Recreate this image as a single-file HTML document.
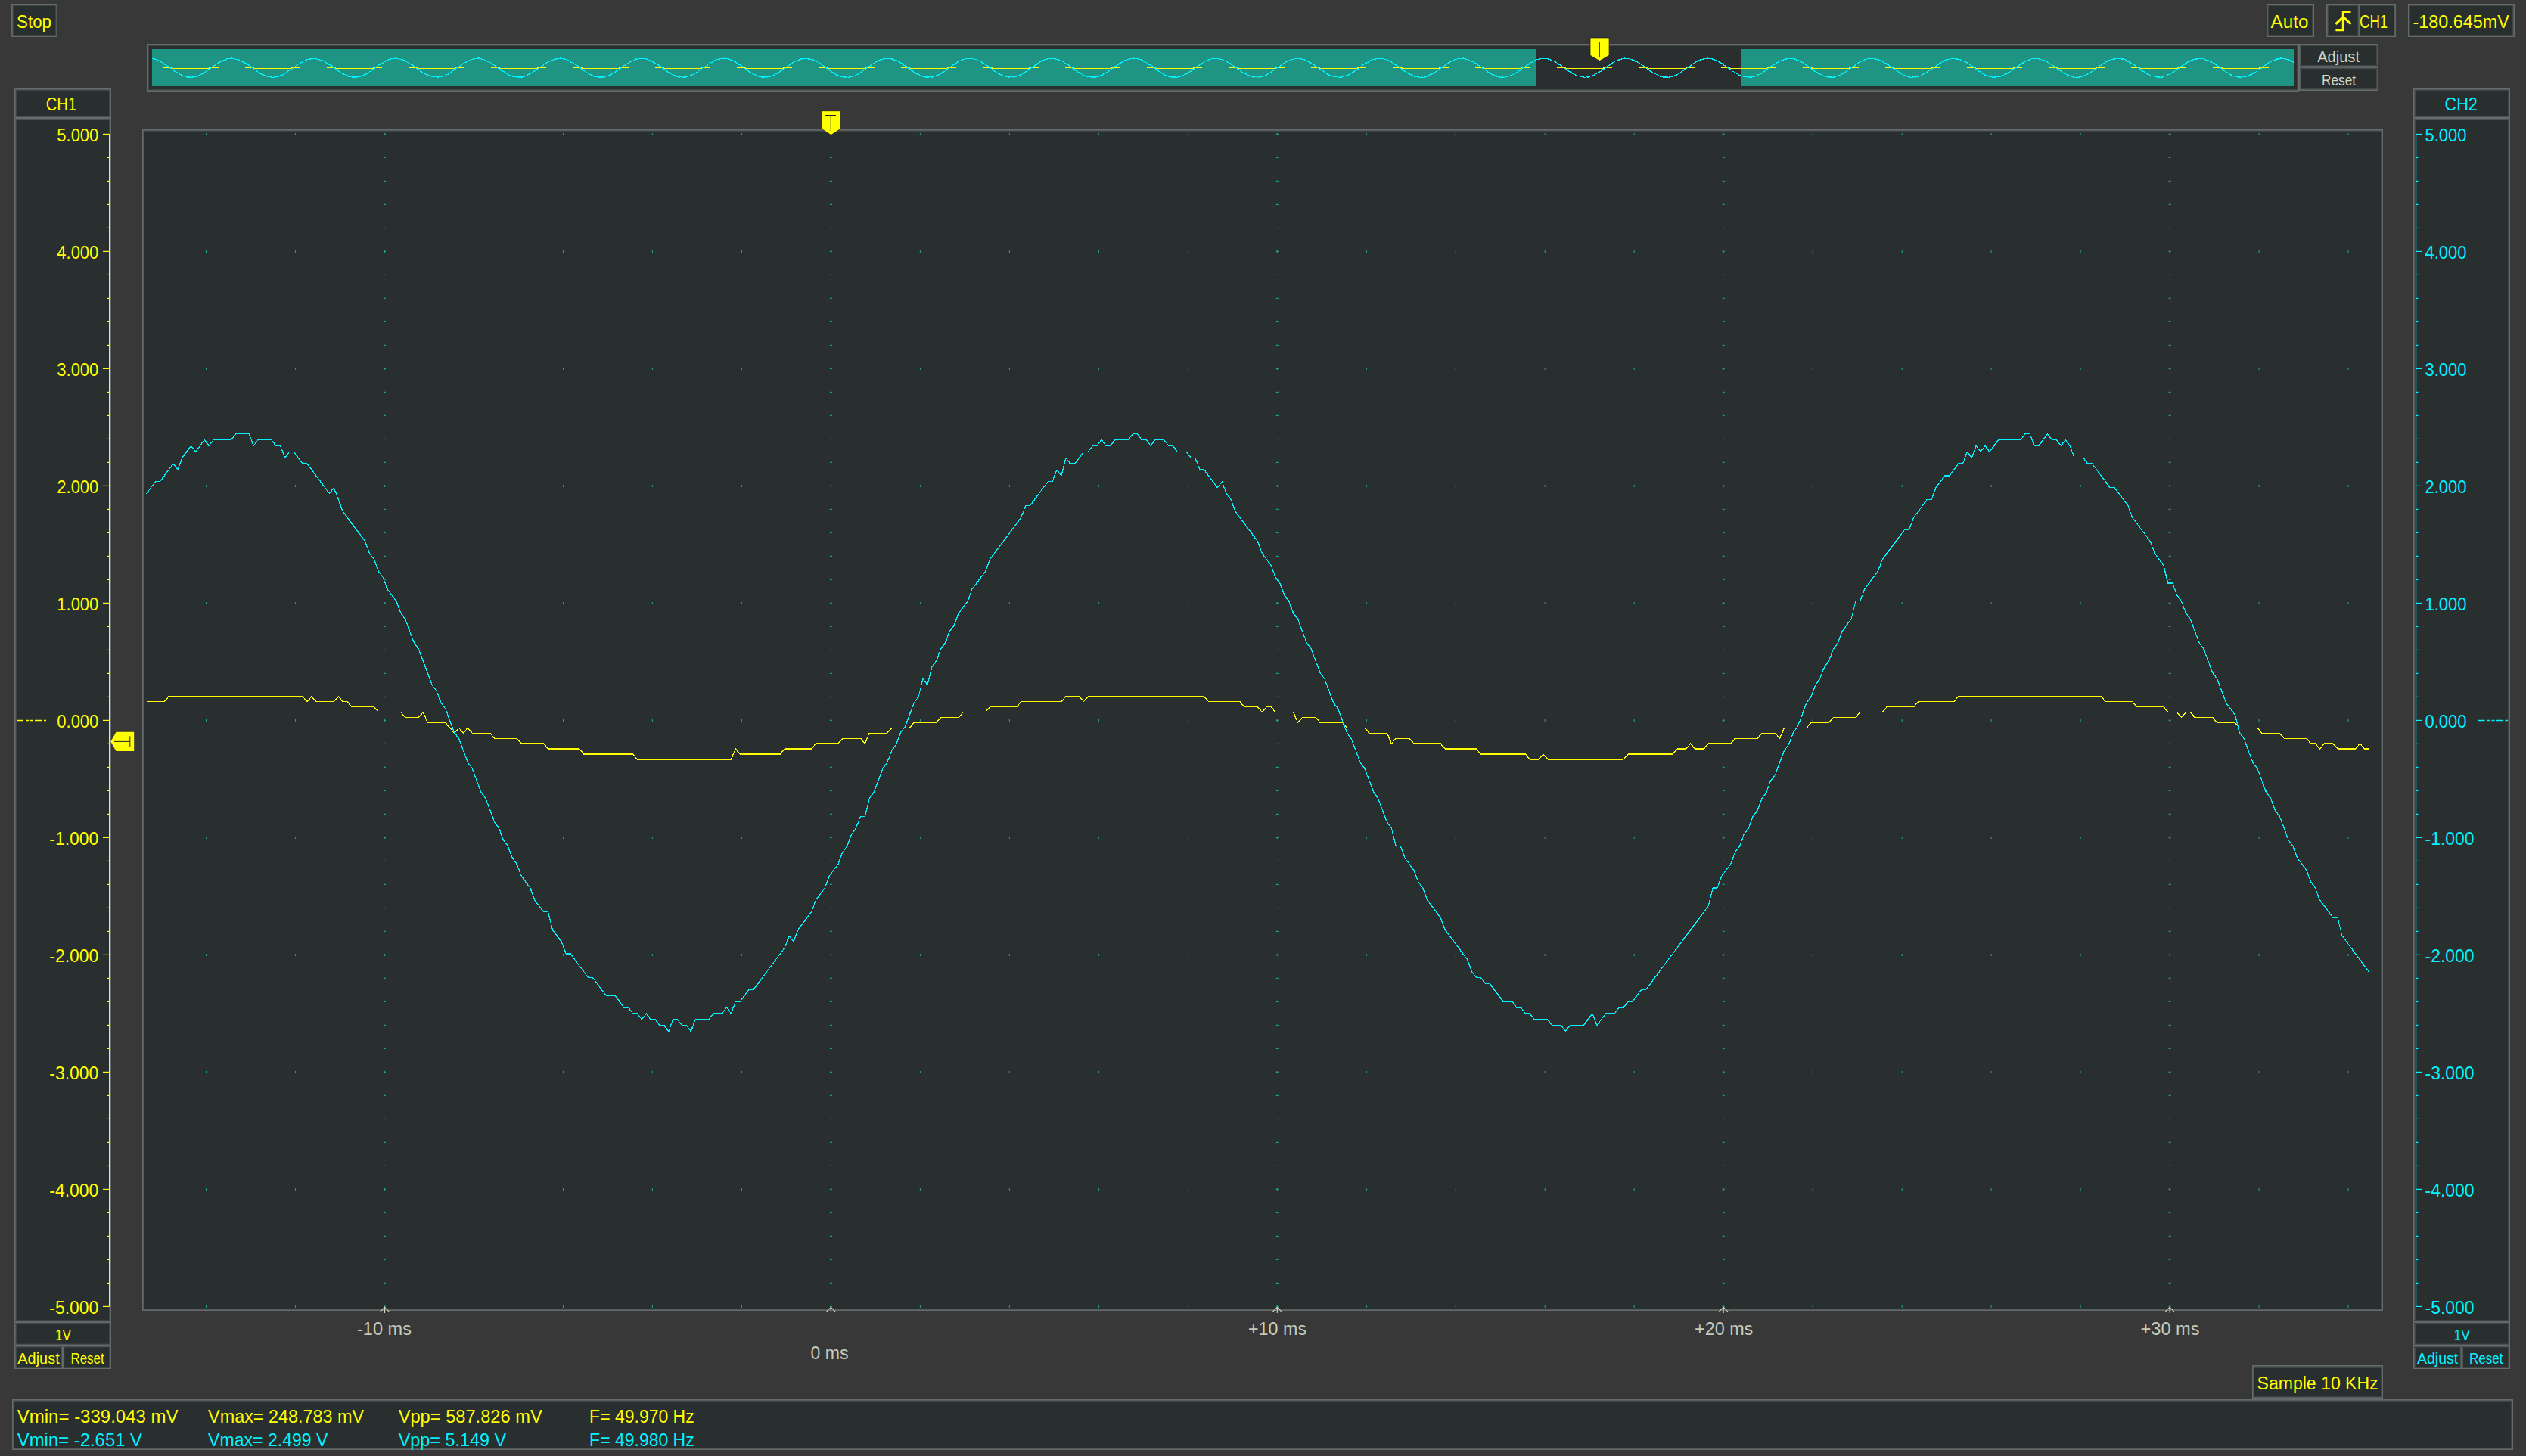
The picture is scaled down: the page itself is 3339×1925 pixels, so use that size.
<!DOCTYPE html><html><head><meta charset="utf-8"><style>html,body{margin:0;padding:0;background:#383838;overflow:hidden}svg{display:block}text{font-family:"Liberation Sans", sans-serif}</style></head><body>
<svg width="3339" height="1925" viewBox="0 0 3339 1925">
<rect x="0" y="0" width="3339" height="1925" fill="#383838"/>
<rect x="15" y="5" width="61" height="44" fill="#656b6b"/>
<rect x="16.2" y="6.2" width="58.6" height="41.6" fill="#515757"/>
<rect x="17.2" y="7.2" width="56.6" height="39.6" fill="#3a4040"/>
<rect x="18" y="8" width="55" height="38" fill="#292e2e"/>
<text x="22" y="37" fill="#ffff00" font-size="23.5" text-anchor="start" textLength="46" lengthAdjust="spacingAndGlyphs">Stop</text>
<rect x="2996" y="5" width="63" height="44" fill="#656b6b"/>
<rect x="2997.2" y="6.2" width="60.6" height="41.6" fill="#515757"/>
<rect x="2998.2" y="7.2" width="58.6" height="39.6" fill="#3a4040"/>
<rect x="2999" y="8" width="57" height="38" fill="#292e2e"/>
<text x="3001.6" y="37" fill="#ffff00" font-size="23.5" text-anchor="start" textLength="49.8" lengthAdjust="spacingAndGlyphs">Auto</text>
<rect x="3075" y="5" width="92" height="44" fill="#656b6b"/>
<rect x="3076.2" y="6.2" width="89.6" height="41.6" fill="#515757"/>
<rect x="3077.2" y="7.2" width="87.6" height="39.6" fill="#3a4040"/>
<rect x="3078" y="8" width="86" height="38" fill="#292e2e"/>
<rect y="7" x="3116.20" height="40" width="3.60" fill="#3a4040"/>
<rect y="7" x="3117.10" height="40" width="1.80" fill="#515757"/>
<rect y="7" x="3117.80" height="40" width="1.00" fill="#656b6b"/>
<path d="M3087.4 39.6 H3097.4 V15.5 H3107.5" fill="none" stroke="#ffff00" stroke-width="3.2" stroke-linejoin="miter"/>
<path d="M3087.4 31.8 L3097.4 22.4 L3107.5 31.8" fill="none" stroke="#ffff00" stroke-width="3.2"/>
<svg x="3119" y="0" width="46" height="55" overflow="hidden">
<text x="0" y="37" fill="#ffff00" font-size="23.5" text-anchor="start" textLength="37.2" lengthAdjust="spacingAndGlyphs">CH1</text>
</svg>
<rect x="3183" y="5" width="141" height="44" fill="#656b6b"/>
<rect x="3184.2" y="6.2" width="138.6" height="41.6" fill="#515757"/>
<rect x="3185.2" y="7.2" width="136.6" height="39.6" fill="#3a4040"/>
<rect x="3186" y="8" width="135" height="38" fill="#292e2e"/>
<text x="3189.6" y="37" fill="#ffff00" font-size="23.5" text-anchor="start" textLength="127.2" lengthAdjust="spacingAndGlyphs">-180.645mV</text>
<rect x="194" y="58" width="2845" height="63" fill="#656b6b"/>
<rect x="195.2" y="59.2" width="2842.6" height="60.6" fill="#515757"/>
<rect x="196.2" y="60.2" width="2840.6" height="58.6" fill="#3a4040"/>
<rect x="197" y="61" width="2839" height="57" fill="#292e2e"/>
<rect x="197" y="61" width="2839" height="57" fill="#2a2e2e"/>
<rect x="201" y="65" width="1830" height="49" fill="#1f9483"/>
<rect x="2302" y="65" width="730" height="49" fill="#1f9483"/>
<polyline points="201.0,88.5 202.0,88.5 203.0,88.5 204.0,88.5 205.0,88.5 206.0,88.5 207.0,88.5 208.0,88.5 209.0,88.5 210.0,88.5 211.0,88.5 212.0,88.5 213.0,88.5 214.0,88.5 215.0,88.5 216.0,89.5 217.0,89.5 218.0,89.5 219.0,89.5 220.0,89.5 221.0,89.5 222.0,89.5 223.0,89.5 224.0,89.5 225.0,89.5 226.0,89.5 227.0,89.5 228.0,90.7 229.0,90.7 230.0,90.7 231.0,90.7 232.0,90.7 233.0,90.7 234.0,90.7 235.0,90.7 236.0,90.7 237.0,90.7 238.0,90.7 239.0,90.7 240.0,90.7 241.0,90.7 242.0,90.7 243.0,90.7 244.0,90.7 245.0,90.7 246.0,90.7 247.0,90.7 248.0,90.7 249.0,90.7 250.0,90.7 251.0,90.7 252.0,90.7 253.0,90.7 254.0,90.7 255.0,90.7 256.0,90.7 257.0,90.7 258.0,90.7 259.0,90.7 260.0,90.7 261.0,90.7 262.0,90.7 263.0,90.7 264.0,90.7 265.0,90.7 266.0,90.7 267.0,90.7 268.0,90.7 269.0,90.7 270.0,90.7 271.0,90.7 272.0,90.7 273.0,90.7 274.0,90.7 275.0,90.7 276.0,90.7 277.0,89.5 278.0,89.5 279.0,89.5 280.0,89.5 281.0,89.5 282.0,89.5 283.0,89.5 284.0,89.5 285.0,89.5 286.0,89.5 287.0,89.5 288.0,89.5 289.0,88.5 290.0,88.5 291.0,88.5 292.0,88.5 293.0,88.5 294.0,88.5 295.0,88.5 296.0,88.5 297.0,88.5 298.0,88.5 299.0,88.5 300.0,88.5 301.0,88.5 302.0,88.5 303.0,88.5 304.0,88.5 305.0,88.5 306.0,88.5 307.0,88.5 308.0,88.5 309.0,88.5 310.0,88.5 311.0,88.5 312.0,88.5 313.0,88.5 314.0,88.5 315.0,88.5 316.0,88.5 317.0,88.5 318.0,88.5 319.0,88.5 320.0,88.5 321.0,88.5 322.0,88.5 323.0,88.5 324.0,88.5 325.0,89.5 326.0,89.5 327.0,89.5 328.0,89.5 329.0,89.5 330.0,89.5 331.0,89.5 332.0,89.5 333.0,89.5 334.0,89.5 335.0,89.5 336.0,90.7 337.0,90.7 338.0,90.7 339.0,90.7 340.0,90.7 341.0,90.7 342.0,90.7 343.0,90.7 344.0,90.7 345.0,90.7 346.0,90.7 347.0,90.7 348.0,90.7 349.0,90.7 350.0,90.7 351.0,90.7 352.0,90.7 353.0,90.7 354.0,90.7 355.0,90.7 356.0,90.7 357.0,90.7 358.0,90.7 359.0,90.7 360.0,90.7 361.0,90.7 362.0,90.7 363.0,90.7 364.0,90.7 365.0,90.7 366.0,90.7 367.0,90.7 368.0,90.7 369.0,90.7 370.0,90.7 371.0,90.7 372.0,90.7 373.0,90.7 374.0,90.7 375.0,90.7 376.0,90.7 377.0,90.7 378.0,90.7 379.0,90.7 380.0,90.7 381.0,90.7 382.0,90.7 383.0,90.7 384.0,90.7 385.0,90.7 386.0,89.5 387.0,89.5 388.0,89.5 389.0,89.5 390.0,89.5 391.0,89.5 392.0,89.5 393.0,89.5 394.0,89.5 395.0,89.5 396.0,89.5 397.0,88.5 398.0,88.5 399.0,88.5 400.0,88.5 401.0,88.5 402.0,88.5 403.0,88.5 404.0,88.5 405.0,88.5 406.0,88.5 407.0,88.5 408.0,88.5 409.0,88.5 410.0,88.5 411.0,88.5 412.0,88.5 413.0,88.5 414.0,88.5 415.0,88.5 416.0,88.5 417.0,88.5 418.0,88.5 419.0,88.5 420.0,88.5 421.0,88.5 422.0,88.5 423.0,88.5 424.0,88.5 425.0,88.5 426.0,88.5 427.0,88.5 428.0,88.5 429.0,88.5 430.0,88.5 431.0,88.5 432.0,88.5 433.0,89.5 434.0,89.5 435.0,89.5 436.0,89.5 437.0,89.5 438.0,89.5 439.0,89.5 440.0,89.5 441.0,89.5 442.0,89.5 443.0,89.5 444.0,90.7 445.0,90.7 446.0,90.7 447.0,90.7 448.0,90.7 449.0,90.7 450.0,90.7 451.0,90.7 452.0,90.7 453.0,90.7 454.0,90.7 455.0,90.7 456.0,90.7 457.0,90.7 458.0,90.7 459.0,90.7 460.0,90.7 461.0,90.7 462.0,90.7 463.0,90.7 464.0,90.7 465.0,90.7 466.0,90.7 467.0,90.7 468.0,90.7 469.0,90.7 470.0,90.7 471.0,90.7 472.0,90.7 473.0,90.7 474.0,90.7 475.0,90.7 476.0,90.7 477.0,90.7 478.0,90.7 479.0,90.7 480.0,90.7 481.0,90.7 482.0,90.7 483.0,90.7 484.0,90.7 485.0,90.7 486.0,90.7 487.0,90.7 488.0,90.7 489.0,90.7 490.0,90.7 491.0,90.7 492.0,90.7 493.0,90.7 494.0,89.5 495.0,89.5 496.0,89.5 497.0,89.5 498.0,89.5 499.0,89.5 500.0,89.5 501.0,89.5 502.0,89.5 503.0,89.5 504.0,89.5 505.0,88.5 506.0,88.5 507.0,88.5 508.0,88.5 509.0,88.5 510.0,88.5 511.0,88.5 512.0,88.5 513.0,88.5 514.0,88.5 515.0,88.5 516.0,88.5 517.0,88.5 518.0,88.5 519.0,88.5 520.0,88.5 521.0,88.5 522.0,88.5 523.0,88.5 524.0,88.5 525.0,88.5 526.0,88.5 527.0,88.5 528.0,88.5 529.0,88.5 530.0,88.5 531.0,88.5 532.0,88.5 533.0,88.5 534.0,88.5 535.0,88.5 536.0,88.5 537.0,88.5 538.0,88.5 539.0,88.5 540.0,88.5 541.0,88.5 542.0,89.5 543.0,89.5 544.0,89.5 545.0,89.5 546.0,89.5 547.0,89.5 548.0,89.5 549.0,89.5 550.0,89.5 551.0,89.5 552.0,89.5 553.0,90.7 554.0,90.7 555.0,90.7 556.0,90.7 557.0,90.7 558.0,90.7 559.0,90.7 560.0,90.7 561.0,90.7 562.0,90.7 563.0,90.7 564.0,90.7 565.0,90.7 566.0,90.7 567.0,90.7 568.0,90.7 569.0,90.7 570.0,90.7 571.0,90.7 572.0,90.7 573.0,90.7 574.0,90.7 575.0,90.7 576.0,90.7 577.0,90.7 578.0,90.7 579.0,90.7 580.0,90.7 581.0,90.7 582.0,90.7 583.0,90.7 584.0,90.7 585.0,90.7 586.0,90.7 587.0,90.7 588.0,90.7 589.0,90.7 590.0,90.7 591.0,90.7 592.0,90.7 593.0,90.7 594.0,90.7 595.0,90.7 596.0,90.7 597.0,90.7 598.0,90.7 599.0,90.7 600.0,90.7 601.0,90.7 602.0,90.7 603.0,89.5 604.0,89.5 605.0,89.5 606.0,89.5 607.0,89.5 608.0,89.5 609.0,89.5 610.0,89.5 611.0,89.5 612.0,89.5 613.0,89.5 614.0,88.5 615.0,88.5 616.0,88.5 617.0,88.5 618.0,88.5 619.0,88.5 620.0,88.5 621.0,88.5 622.0,88.5 623.0,88.5 624.0,88.5 625.0,88.5 626.0,88.5 627.0,88.5 628.0,88.5 629.0,88.5 630.0,88.5 631.0,88.5 632.0,88.5 633.0,88.5 634.0,88.5 635.0,88.5 636.0,88.5 637.0,88.5 638.0,88.5 639.0,88.5 640.0,88.5 641.0,88.5 642.0,88.5 643.0,88.5 644.0,88.5 645.0,88.5 646.0,88.5 647.0,88.5 648.0,88.5 649.0,88.5 650.0,89.5 651.0,89.5 652.0,89.5 653.0,89.5 654.0,89.5 655.0,89.5 656.0,89.5 657.0,89.5 658.0,89.5 659.0,89.5 660.0,89.5 661.0,90.7 662.0,90.7 663.0,90.7 664.0,90.7 665.0,90.7 666.0,90.7 667.0,90.7 668.0,90.7 669.0,90.7 670.0,90.7 671.0,90.7 672.0,90.7 673.0,90.7 674.0,90.7 675.0,90.7 676.0,90.7 677.0,90.7 678.0,90.7 679.0,90.7 680.0,90.7 681.0,90.7 682.0,90.7 683.0,90.7 684.0,90.7 685.0,90.7 686.0,90.7 687.0,90.7 688.0,90.7 689.0,90.7 690.0,90.7 691.0,90.7 692.0,90.7 693.0,90.7 694.0,90.7 695.0,90.7 696.0,90.7 697.0,90.7 698.0,90.7 699.0,90.7 700.0,90.7 701.0,90.7 702.0,90.7 703.0,90.7 704.0,90.7 705.0,90.7 706.0,90.7 707.0,90.7 708.0,90.7 709.0,90.7 710.0,90.7 711.0,89.5 712.0,89.5 713.0,89.5 714.0,89.5 715.0,89.5 716.0,89.5 717.0,89.5 718.0,89.5 719.0,89.5 720.0,89.5 721.0,89.5 722.0,88.5 723.0,88.5 724.0,88.5 725.0,88.5 726.0,88.5 727.0,88.5 728.0,88.5 729.0,88.5 730.0,88.5 731.0,88.5 732.0,88.5 733.0,88.5 734.0,88.5 735.0,88.5 736.0,88.5 737.0,88.5 738.0,88.5 739.0,88.5 740.0,88.5 741.0,88.5 742.0,88.5 743.0,88.5 744.0,88.5 745.0,88.5 746.0,88.5 747.0,88.5 748.0,88.5 749.0,88.5 750.0,88.5 751.0,88.5 752.0,88.5 753.0,88.5 754.0,88.5 755.0,88.5 756.0,88.5 757.0,88.5 758.0,89.5 759.0,89.5 760.0,89.5 761.0,89.5 762.0,89.5 763.0,89.5 764.0,89.5 765.0,89.5 766.0,89.5 767.0,89.5 768.0,89.5 769.0,89.5 770.0,90.7 771.0,90.7 772.0,90.7 773.0,90.7 774.0,90.7 775.0,90.7 776.0,90.7 777.0,90.7 778.0,90.7 779.0,90.7 780.0,90.7 781.0,90.7 782.0,90.7 783.0,90.7 784.0,90.7 785.0,90.7 786.0,90.7 787.0,90.7 788.0,90.7 789.0,90.7 790.0,90.7 791.0,90.7 792.0,90.7 793.0,90.7 794.0,90.7 795.0,90.7 796.0,90.7 797.0,90.7 798.0,90.7 799.0,90.7 800.0,90.7 801.0,90.7 802.0,90.7 803.0,90.7 804.0,90.7 805.0,90.7 806.0,90.7 807.0,90.7 808.0,90.7 809.0,90.7 810.0,90.7 811.0,90.7 812.0,90.7 813.0,90.7 814.0,90.7 815.0,90.7 816.0,90.7 817.0,90.7 818.0,90.7 819.0,89.5 820.0,89.5 821.0,89.5 822.0,89.5 823.0,89.5 824.0,89.5 825.0,89.5 826.0,89.5 827.0,89.5 828.0,89.5 829.0,89.5 830.0,89.5 831.0,88.5 832.0,88.5 833.0,88.5 834.0,88.5 835.0,88.5 836.0,88.5 837.0,88.5 838.0,88.5 839.0,88.5 840.0,88.5 841.0,88.5 842.0,88.5 843.0,88.5 844.0,88.5 845.0,88.5 846.0,88.5 847.0,88.5 848.0,88.5 849.0,88.5 850.0,88.5 851.0,88.5 852.0,88.5 853.0,88.5 854.0,88.5 855.0,88.5 856.0,88.5 857.0,88.5 858.0,88.5 859.0,88.5 860.0,88.5 861.0,88.5 862.0,88.5 863.0,88.5 864.0,88.5 865.0,88.5 866.0,88.5 867.0,89.5 868.0,89.5 869.0,89.5 870.0,89.5 871.0,89.5 872.0,89.5 873.0,89.5 874.0,89.5 875.0,89.5 876.0,89.5 877.0,89.5 878.0,90.7 879.0,90.7 880.0,90.7 881.0,90.7 882.0,90.7 883.0,90.7 884.0,90.7 885.0,90.7 886.0,90.7 887.0,90.7 888.0,90.7 889.0,90.7 890.0,90.7 891.0,90.7 892.0,90.7 893.0,90.7 894.0,90.7 895.0,90.7 896.0,90.7 897.0,90.7 898.0,90.7 899.0,90.7 900.0,90.7 901.0,90.7 902.0,90.7 903.0,90.7 904.0,90.7 905.0,90.7 906.0,90.7 907.0,90.7 908.0,90.7 909.0,90.7 910.0,90.7 911.0,90.7 912.0,90.7 913.0,90.7 914.0,90.7 915.0,90.7 916.0,90.7 917.0,90.7 918.0,90.7 919.0,90.7 920.0,90.7 921.0,90.7 922.0,90.7 923.0,90.7 924.0,90.7 925.0,90.7 926.0,90.7 927.0,90.7 928.0,89.5 929.0,89.5 930.0,89.5 931.0,89.5 932.0,89.5 933.0,89.5 934.0,89.5 935.0,89.5 936.0,89.5 937.0,89.5 938.0,89.5 939.0,88.5 940.0,88.5 941.0,88.5 942.0,88.5 943.0,88.5 944.0,88.5 945.0,88.5 946.0,88.5 947.0,88.5 948.0,88.5 949.0,88.5 950.0,88.5 951.0,88.5 952.0,88.5 953.0,88.5 954.0,88.5 955.0,88.5 956.0,88.5 957.0,88.5 958.0,88.5 959.0,88.5 960.0,88.5 961.0,88.5 962.0,88.5 963.0,88.5 964.0,88.5 965.0,88.5 966.0,88.5 967.0,88.5 968.0,88.5 969.0,88.5 970.0,88.5 971.0,88.5 972.0,88.5 973.0,88.5 974.0,88.5 975.0,89.5 976.0,89.5 977.0,89.5 978.0,89.5 979.0,89.5 980.0,89.5 981.0,89.5 982.0,89.5 983.0,89.5 984.0,89.5 985.0,89.5 986.0,90.7 987.0,90.7 988.0,90.7 989.0,90.7 990.0,90.7 991.0,90.7 992.0,90.7 993.0,90.7 994.0,90.7 995.0,90.7 996.0,90.7 997.0,90.7 998.0,90.7 999.0,90.7 1000.0,90.7 1001.0,90.7 1002.0,90.7 1003.0,90.7 1004.0,90.7 1005.0,90.7 1006.0,90.7 1007.0,90.7 1008.0,90.7 1009.0,90.7 1010.0,90.7 1011.0,90.7 1012.0,90.7 1013.0,90.7 1014.0,90.7 1015.0,90.7 1016.0,90.7 1017.0,90.7 1018.0,90.7 1019.0,90.7 1020.0,90.7 1021.0,90.7 1022.0,90.7 1023.0,90.7 1024.0,90.7 1025.0,90.7 1026.0,90.7 1027.0,90.7 1028.0,90.7 1029.0,90.7 1030.0,90.7 1031.0,90.7 1032.0,90.7 1033.0,90.7 1034.0,90.7 1035.0,90.7 1036.0,89.5 1037.0,89.5 1038.0,89.5 1039.0,89.5 1040.0,89.5 1041.0,89.5 1042.0,89.5 1043.0,89.5 1044.0,89.5 1045.0,89.5 1046.0,89.5 1047.0,88.5 1048.0,88.5 1049.0,88.5 1050.0,88.5 1051.0,88.5 1052.0,88.5 1053.0,88.5 1054.0,88.5 1055.0,88.5 1056.0,88.5 1057.0,88.5 1058.0,88.5 1059.0,88.5 1060.0,88.5 1061.0,88.5 1062.0,88.5 1063.0,88.5 1064.0,88.5 1065.0,88.5 1066.0,88.5 1067.0,88.5 1068.0,88.5 1069.0,88.5 1070.0,88.5 1071.0,88.5 1072.0,88.5 1073.0,88.5 1074.0,88.5 1075.0,88.5 1076.0,88.5 1077.0,88.5 1078.0,88.5 1079.0,88.5 1080.0,88.5 1081.0,88.5 1082.0,88.5 1083.0,88.5 1084.0,89.5 1085.0,89.5 1086.0,89.5 1087.0,89.5 1088.0,89.5 1089.0,89.5 1090.0,89.5 1091.0,89.5 1092.0,89.5 1093.0,89.5 1094.0,89.5 1095.0,90.7 1096.0,90.7 1097.0,90.7 1098.0,90.7 1099.0,90.7 1100.0,90.7 1101.0,90.7 1102.0,90.7 1103.0,90.7 1104.0,90.7 1105.0,90.7 1106.0,90.7 1107.0,90.7 1108.0,90.7 1109.0,90.7 1110.0,90.7 1111.0,90.7 1112.0,90.7 1113.0,90.7 1114.0,90.7 1115.0,90.7 1116.0,90.7 1117.0,90.7 1118.0,90.7 1119.0,90.7 1120.0,90.7 1121.0,90.7 1122.0,90.7 1123.0,90.7 1124.0,90.7 1125.0,90.7 1126.0,90.7 1127.0,90.7 1128.0,90.7 1129.0,90.7 1130.0,90.7 1131.0,90.7 1132.0,90.7 1133.0,90.7 1134.0,90.7 1135.0,90.7 1136.0,90.7 1137.0,90.7 1138.0,90.7 1139.0,90.7 1140.0,90.7 1141.0,90.7 1142.0,90.7 1143.0,90.7 1144.0,90.7 1145.0,89.5 1146.0,89.5 1147.0,89.5 1148.0,89.5 1149.0,89.5 1150.0,89.5 1151.0,89.5 1152.0,89.5 1153.0,89.5 1154.0,89.5 1155.0,89.5 1156.0,88.5 1157.0,88.5 1158.0,88.5 1159.0,88.5 1160.0,88.5 1161.0,88.5 1162.0,88.5 1163.0,88.5 1164.0,88.5 1165.0,88.5 1166.0,88.5 1167.0,88.5 1168.0,88.5 1169.0,88.5 1170.0,88.5 1171.0,88.5 1172.0,88.5 1173.0,88.5 1174.0,88.5 1175.0,88.5 1176.0,88.5 1177.0,88.5 1178.0,88.5 1179.0,88.5 1180.0,88.5 1181.0,88.5 1182.0,88.5 1183.0,88.5 1184.0,88.5 1185.0,88.5 1186.0,88.5 1187.0,88.5 1188.0,88.5 1189.0,88.5 1190.0,88.5 1191.0,88.5 1192.0,89.5 1193.0,89.5 1194.0,89.5 1195.0,89.5 1196.0,89.5 1197.0,89.5 1198.0,89.5 1199.0,89.5 1200.0,89.5 1201.0,89.5 1202.0,89.5 1203.0,90.7 1204.0,90.7 1205.0,90.7 1206.0,90.7 1207.0,90.7 1208.0,90.7 1209.0,90.7 1210.0,90.7 1211.0,90.7 1212.0,90.7 1213.0,90.7 1214.0,90.7 1215.0,90.7 1216.0,90.7 1217.0,90.7 1218.0,90.7 1219.0,90.7 1220.0,90.7 1221.0,90.7 1222.0,90.7 1223.0,90.7 1224.0,90.7 1225.0,90.7 1226.0,90.7 1227.0,90.7 1228.0,90.7 1229.0,90.7 1230.0,90.7 1231.0,90.7 1232.0,90.7 1233.0,90.7 1234.0,90.7 1235.0,90.7 1236.0,90.7 1237.0,90.7 1238.0,90.7 1239.0,90.7 1240.0,90.7 1241.0,90.7 1242.0,90.7 1243.0,90.7 1244.0,90.7 1245.0,90.7 1246.0,90.7 1247.0,90.7 1248.0,90.7 1249.0,90.7 1250.0,90.7 1251.0,90.7 1252.0,90.7 1253.0,89.5 1254.0,89.5 1255.0,89.5 1256.0,89.5 1257.0,89.5 1258.0,89.5 1259.0,89.5 1260.0,89.5 1261.0,89.5 1262.0,89.5 1263.0,89.5 1264.0,88.5 1265.0,88.5 1266.0,88.5 1267.0,88.5 1268.0,88.5 1269.0,88.5 1270.0,88.5 1271.0,88.5 1272.0,88.5 1273.0,88.5 1274.0,88.5 1275.0,88.5 1276.0,88.5 1277.0,88.5 1278.0,88.5 1279.0,88.5 1280.0,88.5 1281.0,88.5 1282.0,88.5 1283.0,88.5 1284.0,88.5 1285.0,88.5 1286.0,88.5 1287.0,88.5 1288.0,88.5 1289.0,88.5 1290.0,88.5 1291.0,88.5 1292.0,88.5 1293.0,88.5 1294.0,88.5 1295.0,88.5 1296.0,88.5 1297.0,88.5 1298.0,88.5 1299.0,88.5 1300.0,89.5 1301.0,89.5 1302.0,89.5 1303.0,89.5 1304.0,89.5 1305.0,89.5 1306.0,89.5 1307.0,89.5 1308.0,89.5 1309.0,89.5 1310.0,89.5 1311.0,89.5 1312.0,90.7 1313.0,90.7 1314.0,90.7 1315.0,90.7 1316.0,90.7 1317.0,90.7 1318.0,90.7 1319.0,90.7 1320.0,90.7 1321.0,90.7 1322.0,90.7 1323.0,90.7 1324.0,90.7 1325.0,90.7 1326.0,90.7 1327.0,90.7 1328.0,90.7 1329.0,90.7 1330.0,90.7 1331.0,90.7 1332.0,90.7 1333.0,90.7 1334.0,90.7 1335.0,90.7 1336.0,90.7 1337.0,90.7 1338.0,90.7 1339.0,90.7 1340.0,90.7 1341.0,90.7 1342.0,90.7 1343.0,90.7 1344.0,90.7 1345.0,90.7 1346.0,90.7 1347.0,90.7 1348.0,90.7 1349.0,90.7 1350.0,90.7 1351.0,90.7 1352.0,90.7 1353.0,90.7 1354.0,90.7 1355.0,90.7 1356.0,90.7 1357.0,90.7 1358.0,90.7 1359.0,90.7 1360.0,90.7 1361.0,89.5 1362.0,89.5 1363.0,89.5 1364.0,89.5 1365.0,89.5 1366.0,89.5 1367.0,89.5 1368.0,89.5 1369.0,89.5 1370.0,89.5 1371.0,89.5 1372.0,89.5 1373.0,88.5 1374.0,88.5 1375.0,88.5 1376.0,88.5 1377.0,88.5 1378.0,88.5 1379.0,88.5 1380.0,88.5 1381.0,88.5 1382.0,88.5 1383.0,88.5 1384.0,88.5 1385.0,88.5 1386.0,88.5 1387.0,88.5 1388.0,88.5 1389.0,88.5 1390.0,88.5 1391.0,88.5 1392.0,88.5 1393.0,88.5 1394.0,88.5 1395.0,88.5 1396.0,88.5 1397.0,88.5 1398.0,88.5 1399.0,88.5 1400.0,88.5 1401.0,88.5 1402.0,88.5 1403.0,88.5 1404.0,88.5 1405.0,88.5 1406.0,88.5 1407.0,88.5 1408.0,88.5 1409.0,89.5 1410.0,89.5 1411.0,89.5 1412.0,89.5 1413.0,89.5 1414.0,89.5 1415.0,89.5 1416.0,89.5 1417.0,89.5 1418.0,89.5 1419.0,89.5 1420.0,90.7 1421.0,90.7 1422.0,90.7 1423.0,90.7 1424.0,90.7 1425.0,90.7 1426.0,90.7 1427.0,90.7 1428.0,90.7 1429.0,90.7 1430.0,90.7 1431.0,90.7 1432.0,90.7 1433.0,90.7 1434.0,90.7 1435.0,90.7 1436.0,90.7 1437.0,90.7 1438.0,90.7 1439.0,90.7 1440.0,90.7 1441.0,90.7 1442.0,90.7 1443.0,90.7 1444.0,90.7 1445.0,90.7 1446.0,90.7 1447.0,90.7 1448.0,90.7 1449.0,90.7 1450.0,90.7 1451.0,90.7 1452.0,90.7 1453.0,90.7 1454.0,90.7 1455.0,90.7 1456.0,90.7 1457.0,90.7 1458.0,90.7 1459.0,90.7 1460.0,90.7 1461.0,90.7 1462.0,90.7 1463.0,90.7 1464.0,90.7 1465.0,90.7 1466.0,90.7 1467.0,90.7 1468.0,90.7 1469.0,90.7 1470.0,89.5 1471.0,89.5 1472.0,89.5 1473.0,89.5 1474.0,89.5 1475.0,89.5 1476.0,89.5 1477.0,89.5 1478.0,89.5 1479.0,89.5 1480.0,89.5 1481.0,88.5 1482.0,88.5 1483.0,88.5 1484.0,88.5 1485.0,88.5 1486.0,88.5 1487.0,88.5 1488.0,88.5 1489.0,88.5 1490.0,88.5 1491.0,88.5 1492.0,88.5 1493.0,88.5 1494.0,88.5 1495.0,88.5 1496.0,88.5 1497.0,88.5 1498.0,88.5 1499.0,88.5 1500.0,88.5 1501.0,88.5 1502.0,88.5 1503.0,88.5 1504.0,88.5 1505.0,88.5 1506.0,88.5 1507.0,88.5 1508.0,88.5 1509.0,88.5 1510.0,88.5 1511.0,88.5 1512.0,88.5 1513.0,88.5 1514.0,88.5 1515.0,88.5 1516.0,88.5 1517.0,89.5 1518.0,89.5 1519.0,89.5 1520.0,89.5 1521.0,89.5 1522.0,89.5 1523.0,89.5 1524.0,89.5 1525.0,89.5 1526.0,89.5 1527.0,89.5 1528.0,90.7 1529.0,90.7 1530.0,90.7 1531.0,90.7 1532.0,90.7 1533.0,90.7 1534.0,90.7 1535.0,90.7 1536.0,90.7 1537.0,90.7 1538.0,90.7 1539.0,90.7 1540.0,90.7 1541.0,90.7 1542.0,90.7 1543.0,90.7 1544.0,90.7 1545.0,90.7 1546.0,90.7 1547.0,90.7 1548.0,90.7 1549.0,90.7 1550.0,90.7 1551.0,90.7 1552.0,90.7 1553.0,90.7 1554.0,90.7 1555.0,90.7 1556.0,90.7 1557.0,90.7 1558.0,90.7 1559.0,90.7 1560.0,90.7 1561.0,90.7 1562.0,90.7 1563.0,90.7 1564.0,90.7 1565.0,90.7 1566.0,90.7 1567.0,90.7 1568.0,90.7 1569.0,90.7 1570.0,90.7 1571.0,90.7 1572.0,90.7 1573.0,90.7 1574.0,90.7 1575.0,90.7 1576.0,90.7 1577.0,90.7 1578.0,89.5 1579.0,89.5 1580.0,89.5 1581.0,89.5 1582.0,89.5 1583.0,89.5 1584.0,89.5 1585.0,89.5 1586.0,89.5 1587.0,89.5 1588.0,89.5 1589.0,88.5 1590.0,88.5 1591.0,88.5 1592.0,88.5 1593.0,88.5 1594.0,88.5 1595.0,88.5 1596.0,88.5 1597.0,88.5 1598.0,88.5 1599.0,88.5 1600.0,88.5 1601.0,88.5 1602.0,88.5 1603.0,88.5 1604.0,88.5 1605.0,88.5 1606.0,88.5 1607.0,88.5 1608.0,88.5 1609.0,88.5 1610.0,88.5 1611.0,88.5 1612.0,88.5 1613.0,88.5 1614.0,88.5 1615.0,88.5 1616.0,88.5 1617.0,88.5 1618.0,88.5 1619.0,88.5 1620.0,88.5 1621.0,88.5 1622.0,88.5 1623.0,88.5 1624.0,88.5 1625.0,88.5 1626.0,89.5 1627.0,89.5 1628.0,89.5 1629.0,89.5 1630.0,89.5 1631.0,89.5 1632.0,89.5 1633.0,89.5 1634.0,89.5 1635.0,89.5 1636.0,89.5 1637.0,90.7 1638.0,90.7 1639.0,90.7 1640.0,90.7 1641.0,90.7 1642.0,90.7 1643.0,90.7 1644.0,90.7 1645.0,90.7 1646.0,90.7 1647.0,90.7 1648.0,90.7 1649.0,90.7 1650.0,90.7 1651.0,90.7 1652.0,90.7 1653.0,90.7 1654.0,90.7 1655.0,90.7 1656.0,90.7 1657.0,90.7 1658.0,90.7 1659.0,90.7 1660.0,90.7 1661.0,90.7 1662.0,90.7 1663.0,90.7 1664.0,90.7 1665.0,90.7 1666.0,90.7 1667.0,90.7 1668.0,90.7 1669.0,90.7 1670.0,90.7 1671.0,90.7 1672.0,90.7 1673.0,90.7 1674.0,90.7 1675.0,90.7 1676.0,90.7 1677.0,90.7 1678.0,90.7 1679.0,90.7 1680.0,90.7 1681.0,90.7 1682.0,90.7 1683.0,90.7 1684.0,90.7 1685.0,90.7 1686.0,90.7 1687.0,89.5 1688.0,89.5 1689.0,89.5 1690.0,89.5 1691.0,89.5 1692.0,89.5 1693.0,89.5 1694.0,89.5 1695.0,89.5 1696.0,89.5 1697.0,89.5 1698.0,88.5 1699.0,88.5 1700.0,88.5 1701.0,88.5 1702.0,88.5 1703.0,88.5 1704.0,88.5 1705.0,88.5 1706.0,88.5 1707.0,88.5 1708.0,88.5 1709.0,88.5 1710.0,88.5 1711.0,88.5 1712.0,88.5 1713.0,88.5 1714.0,88.5 1715.0,88.5 1716.0,88.5 1717.0,88.5 1718.0,88.5 1719.0,88.5 1720.0,88.5 1721.0,88.5 1722.0,88.5 1723.0,88.5 1724.0,88.5 1725.0,88.5 1726.0,88.5 1727.0,88.5 1728.0,88.5 1729.0,88.5 1730.0,88.5 1731.0,88.5 1732.0,88.5 1733.0,88.5 1734.0,89.5 1735.0,89.5 1736.0,89.5 1737.0,89.5 1738.0,89.5 1739.0,89.5 1740.0,89.5 1741.0,89.5 1742.0,89.5 1743.0,89.5 1744.0,89.5 1745.0,90.7 1746.0,90.7 1747.0,90.7 1748.0,90.7 1749.0,90.7 1750.0,90.7 1751.0,90.7 1752.0,90.7 1753.0,90.7 1754.0,90.7 1755.0,90.7 1756.0,90.7 1757.0,90.7 1758.0,90.7 1759.0,90.7 1760.0,90.7 1761.0,90.7 1762.0,90.7 1763.0,90.7 1764.0,90.7 1765.0,90.7 1766.0,90.7 1767.0,90.7 1768.0,90.7 1769.0,90.7 1770.0,90.7 1771.0,90.7 1772.0,90.7 1773.0,90.7 1774.0,90.7 1775.0,90.7 1776.0,90.7 1777.0,90.7 1778.0,90.7 1779.0,90.7 1780.0,90.7 1781.0,90.7 1782.0,90.7 1783.0,90.7 1784.0,90.7 1785.0,90.7 1786.0,90.7 1787.0,90.7 1788.0,90.7 1789.0,90.7 1790.0,90.7 1791.0,90.7 1792.0,90.7 1793.0,90.7 1794.0,90.7 1795.0,89.5 1796.0,89.5 1797.0,89.5 1798.0,89.5 1799.0,89.5 1800.0,89.5 1801.0,89.5 1802.0,89.5 1803.0,89.5 1804.0,89.5 1805.0,89.5 1806.0,88.5 1807.0,88.5 1808.0,88.5 1809.0,88.5 1810.0,88.5 1811.0,88.5 1812.0,88.5 1813.0,88.5 1814.0,88.5 1815.0,88.5 1816.0,88.5 1817.0,88.5 1818.0,88.5 1819.0,88.5 1820.0,88.5 1821.0,88.5 1822.0,88.5 1823.0,88.5 1824.0,88.5 1825.0,88.5 1826.0,88.5 1827.0,88.5 1828.0,88.5 1829.0,88.5 1830.0,88.5 1831.0,88.5 1832.0,88.5 1833.0,88.5 1834.0,88.5 1835.0,88.5 1836.0,88.5 1837.0,88.5 1838.0,88.5 1839.0,88.5 1840.0,88.5 1841.0,88.5 1842.0,89.5 1843.0,89.5 1844.0,89.5 1845.0,89.5 1846.0,89.5 1847.0,89.5 1848.0,89.5 1849.0,89.5 1850.0,89.5 1851.0,89.5 1852.0,89.5 1853.0,89.5 1854.0,90.7 1855.0,90.7 1856.0,90.7 1857.0,90.7 1858.0,90.7 1859.0,90.7 1860.0,90.7 1861.0,90.7 1862.0,90.7 1863.0,90.7 1864.0,90.7 1865.0,90.7 1866.0,90.7 1867.0,90.7 1868.0,90.7 1869.0,90.7 1870.0,90.7 1871.0,90.7 1872.0,90.7 1873.0,90.7 1874.0,90.7 1875.0,90.7 1876.0,90.7 1877.0,90.7 1878.0,90.7 1879.0,90.7 1880.0,90.7 1881.0,90.7 1882.0,90.7 1883.0,90.7 1884.0,90.7 1885.0,90.7 1886.0,90.7 1887.0,90.7 1888.0,90.7 1889.0,90.7 1890.0,90.7 1891.0,90.7 1892.0,90.7 1893.0,90.7 1894.0,90.7 1895.0,90.7 1896.0,90.7 1897.0,90.7 1898.0,90.7 1899.0,90.7 1900.0,90.7 1901.0,90.7 1902.0,90.7 1903.0,89.5 1904.0,89.5 1905.0,89.5 1906.0,89.5 1907.0,89.5 1908.0,89.5 1909.0,89.5 1910.0,89.5 1911.0,89.5 1912.0,89.5 1913.0,89.5 1914.0,89.5 1915.0,88.5 1916.0,88.5 1917.0,88.5 1918.0,88.5 1919.0,88.5 1920.0,88.5 1921.0,88.5 1922.0,88.5 1923.0,88.5 1924.0,88.5 1925.0,88.5 1926.0,88.5 1927.0,88.5 1928.0,88.5 1929.0,88.5 1930.0,88.5 1931.0,88.5 1932.0,88.5 1933.0,88.5 1934.0,88.5 1935.0,88.5 1936.0,88.5 1937.0,88.5 1938.0,88.5 1939.0,88.5 1940.0,88.5 1941.0,88.5 1942.0,88.5 1943.0,88.5 1944.0,88.5 1945.0,88.5 1946.0,88.5 1947.0,88.5 1948.0,88.5 1949.0,88.5 1950.0,88.5 1951.0,89.5 1952.0,89.5 1953.0,89.5 1954.0,89.5 1955.0,89.5 1956.0,89.5 1957.0,89.5 1958.0,89.5 1959.0,89.5 1960.0,89.5 1961.0,89.5 1962.0,90.7 1963.0,90.7 1964.0,90.7 1965.0,90.7 1966.0,90.7 1967.0,90.7 1968.0,90.7 1969.0,90.7 1970.0,90.7 1971.0,90.7 1972.0,90.7 1973.0,90.7 1974.0,90.7 1975.0,90.7 1976.0,90.7 1977.0,90.7 1978.0,90.7 1979.0,90.7 1980.0,90.7 1981.0,90.7 1982.0,90.7 1983.0,90.7 1984.0,90.7 1985.0,90.7 1986.0,90.7 1987.0,90.7 1988.0,90.7 1989.0,90.7 1990.0,90.7 1991.0,90.7 1992.0,90.7 1993.0,90.7 1994.0,90.7 1995.0,90.7 1996.0,90.7 1997.0,90.7 1998.0,90.7 1999.0,90.7 2000.0,90.7 2001.0,90.7 2002.0,90.7 2003.0,90.7 2004.0,90.7 2005.0,90.7 2006.0,90.7 2007.0,90.7 2008.0,90.7 2009.0,90.7 2010.0,90.7 2011.0,90.7 2012.0,89.5 2013.0,89.5 2014.0,89.5 2015.0,89.5 2016.0,89.5 2017.0,89.5 2018.0,89.5 2019.0,89.5 2020.0,89.5 2021.0,89.5 2022.0,89.5 2023.0,88.5 2024.0,88.5 2025.0,88.5 2026.0,88.5 2027.0,88.5 2028.0,88.5 2029.0,88.5 2030.0,88.5 2031.0,88.5 2032.0,88.5 2033.0,88.5 2034.0,88.5 2035.0,88.5 2036.0,88.5 2037.0,88.5 2038.0,88.5 2039.0,88.5 2040.0,88.5 2041.0,88.5 2042.0,88.5 2043.0,88.5 2044.0,88.5 2045.0,88.5 2046.0,88.5 2047.0,88.5 2048.0,88.5 2049.0,88.5 2050.0,88.5 2051.0,88.5 2052.0,88.5 2053.0,88.5 2054.0,88.5 2055.0,88.5 2056.0,88.5 2057.0,88.5 2058.0,88.5 2059.0,89.5 2060.0,89.5 2061.0,89.5 2062.0,89.5 2063.0,89.5 2064.0,89.5 2065.0,89.5 2066.0,89.5 2067.0,89.5 2068.0,89.5 2069.0,89.5 2070.0,90.7 2071.0,90.7 2072.0,90.7 2073.0,90.7 2074.0,90.7 2075.0,90.7 2076.0,90.7 2077.0,90.7 2078.0,90.7 2079.0,90.7 2080.0,90.7 2081.0,90.7 2082.0,90.7 2083.0,90.7 2084.0,90.7 2085.0,90.7 2086.0,90.7 2087.0,90.7 2088.0,90.7 2089.0,90.7 2090.0,90.7 2091.0,90.7 2092.0,90.7 2093.0,90.7 2094.0,90.7 2095.0,90.7 2096.0,90.7 2097.0,90.7 2098.0,90.7 2099.0,90.7 2100.0,90.7 2101.0,90.7 2102.0,90.7 2103.0,90.7 2104.0,90.7 2105.0,90.7 2106.0,90.7 2107.0,90.7 2108.0,90.7 2109.0,90.7 2110.0,90.7 2111.0,90.7 2112.0,90.7 2113.0,90.7 2114.0,90.7 2115.0,90.7 2116.0,90.7 2117.0,90.7 2118.0,90.7 2119.0,90.7 2120.0,89.5 2121.0,89.5 2122.0,89.5 2123.0,89.5 2124.0,89.5 2125.0,89.5 2126.0,89.5 2127.0,89.5 2128.0,89.5 2129.0,89.5 2130.0,89.5 2131.0,88.5 2132.0,88.5 2133.0,88.5 2134.0,88.5 2135.0,88.5 2136.0,88.5 2137.0,88.5 2138.0,88.5 2139.0,88.5 2140.0,88.5 2141.0,88.5 2142.0,88.5 2143.0,88.5 2144.0,88.5 2145.0,88.5 2146.0,88.5 2147.0,88.5 2148.0,88.5 2149.0,88.5 2150.0,88.5 2151.0,88.5 2152.0,88.5 2153.0,88.5 2154.0,88.5 2155.0,88.5 2156.0,88.5 2157.0,88.5 2158.0,88.5 2159.0,88.5 2160.0,88.5 2161.0,88.5 2162.0,88.5 2163.0,88.5 2164.0,88.5 2165.0,88.5 2166.0,88.5 2167.0,88.5 2168.0,89.5 2169.0,89.5 2170.0,89.5 2171.0,89.5 2172.0,89.5 2173.0,89.5 2174.0,89.5 2175.0,89.5 2176.0,89.5 2177.0,89.5 2178.0,89.5 2179.0,90.7 2180.0,90.7 2181.0,90.7 2182.0,90.7 2183.0,90.7 2184.0,90.7 2185.0,90.7 2186.0,90.7 2187.0,90.7 2188.0,90.7 2189.0,90.7 2190.0,90.7 2191.0,90.7 2192.0,90.7 2193.0,90.7 2194.0,90.7 2195.0,90.7 2196.0,90.7 2197.0,90.7 2198.0,90.7 2199.0,90.7 2200.0,90.7 2201.0,90.7 2202.0,90.7 2203.0,90.7 2204.0,90.7 2205.0,90.7 2206.0,90.7 2207.0,90.7 2208.0,90.7 2209.0,90.7 2210.0,90.7 2211.0,90.7 2212.0,90.7 2213.0,90.7 2214.0,90.7 2215.0,90.7 2216.0,90.7 2217.0,90.7 2218.0,90.7 2219.0,90.7 2220.0,90.7 2221.0,90.7 2222.0,90.7 2223.0,90.7 2224.0,90.7 2225.0,90.7 2226.0,90.7 2227.0,90.7 2228.0,90.7 2229.0,89.5 2230.0,89.5 2231.0,89.5 2232.0,89.5 2233.0,89.5 2234.0,89.5 2235.0,89.5 2236.0,89.5 2237.0,89.5 2238.0,89.5 2239.0,89.5 2240.0,88.5 2241.0,88.5 2242.0,88.5 2243.0,88.5 2244.0,88.5 2245.0,88.5 2246.0,88.5 2247.0,88.5 2248.0,88.5 2249.0,88.5 2250.0,88.5 2251.0,88.5 2252.0,88.5 2253.0,88.5 2254.0,88.5 2255.0,88.5 2256.0,88.5 2257.0,88.5 2258.0,88.5 2259.0,88.5 2260.0,88.5 2261.0,88.5 2262.0,88.5 2263.0,88.5 2264.0,88.5 2265.0,88.5 2266.0,88.5 2267.0,88.5 2268.0,88.5 2269.0,88.5 2270.0,88.5 2271.0,88.5 2272.0,88.5 2273.0,88.5 2274.0,88.5 2275.0,88.5 2276.0,89.5 2277.0,89.5 2278.0,89.5 2279.0,89.5 2280.0,89.5 2281.0,89.5 2282.0,89.5 2283.0,89.5 2284.0,89.5 2285.0,89.5 2286.0,89.5 2287.0,90.7 2288.0,90.7 2289.0,90.7 2290.0,90.7 2291.0,90.7 2292.0,90.7 2293.0,90.7 2294.0,90.7 2295.0,90.7 2296.0,90.7 2297.0,90.7 2298.0,90.7 2299.0,90.7 2300.0,90.7 2301.0,90.7 2302.0,90.7 2303.0,90.7 2304.0,90.7 2305.0,90.7 2306.0,90.7 2307.0,90.7 2308.0,90.7 2309.0,90.7 2310.0,90.7 2311.0,90.7 2312.0,90.7 2313.0,90.7 2314.0,90.7 2315.0,90.7 2316.0,90.7 2317.0,90.7 2318.0,90.7 2319.0,90.7 2320.0,90.7 2321.0,90.7 2322.0,90.7 2323.0,90.7 2324.0,90.7 2325.0,90.7 2326.0,90.7 2327.0,90.7 2328.0,90.7 2329.0,90.7 2330.0,90.7 2331.0,90.7 2332.0,90.7 2333.0,90.7 2334.0,90.7 2335.0,90.7 2336.0,90.7 2337.0,89.5 2338.0,89.5 2339.0,89.5 2340.0,89.5 2341.0,89.5 2342.0,89.5 2343.0,89.5 2344.0,89.5 2345.0,89.5 2346.0,89.5 2347.0,89.5 2348.0,88.5 2349.0,88.5 2350.0,88.5 2351.0,88.5 2352.0,88.5 2353.0,88.5 2354.0,88.5 2355.0,88.5 2356.0,88.5 2357.0,88.5 2358.0,88.5 2359.0,88.5 2360.0,88.5 2361.0,88.5 2362.0,88.5 2363.0,88.5 2364.0,88.5 2365.0,88.5 2366.0,88.5 2367.0,88.5 2368.0,88.5 2369.0,88.5 2370.0,88.5 2371.0,88.5 2372.0,88.5 2373.0,88.5 2374.0,88.5 2375.0,88.5 2376.0,88.5 2377.0,88.5 2378.0,88.5 2379.0,88.5 2380.0,88.5 2381.0,88.5 2382.0,88.5 2383.0,88.5 2384.0,89.5 2385.0,89.5 2386.0,89.5 2387.0,89.5 2388.0,89.5 2389.0,89.5 2390.0,89.5 2391.0,89.5 2392.0,89.5 2393.0,89.5 2394.0,89.5 2395.0,89.5 2396.0,90.7 2397.0,90.7 2398.0,90.7 2399.0,90.7 2400.0,90.7 2401.0,90.7 2402.0,90.7 2403.0,90.7 2404.0,90.7 2405.0,90.7 2406.0,90.7 2407.0,90.7 2408.0,90.7 2409.0,90.7 2410.0,90.7 2411.0,90.7 2412.0,90.7 2413.0,90.7 2414.0,90.7 2415.0,90.7 2416.0,90.7 2417.0,90.7 2418.0,90.7 2419.0,90.7 2420.0,90.7 2421.0,90.7 2422.0,90.7 2423.0,90.7 2424.0,90.7 2425.0,90.7 2426.0,90.7 2427.0,90.7 2428.0,90.7 2429.0,90.7 2430.0,90.7 2431.0,90.7 2432.0,90.7 2433.0,90.7 2434.0,90.7 2435.0,90.7 2436.0,90.7 2437.0,90.7 2438.0,90.7 2439.0,90.7 2440.0,90.7 2441.0,90.7 2442.0,90.7 2443.0,90.7 2444.0,90.7 2445.0,89.5 2446.0,89.5 2447.0,89.5 2448.0,89.5 2449.0,89.5 2450.0,89.5 2451.0,89.5 2452.0,89.5 2453.0,89.5 2454.0,89.5 2455.0,89.5 2456.0,89.5 2457.0,88.5 2458.0,88.5 2459.0,88.5 2460.0,88.5 2461.0,88.5 2462.0,88.5 2463.0,88.5 2464.0,88.5 2465.0,88.5 2466.0,88.5 2467.0,88.5 2468.0,88.5 2469.0,88.5 2470.0,88.5 2471.0,88.5 2472.0,88.5 2473.0,88.5 2474.0,88.5 2475.0,88.5 2476.0,88.5 2477.0,88.5 2478.0,88.5 2479.0,88.5 2480.0,88.5 2481.0,88.5 2482.0,88.5 2483.0,88.5 2484.0,88.5 2485.0,88.5 2486.0,88.5 2487.0,88.5 2488.0,88.5 2489.0,88.5 2490.0,88.5 2491.0,88.5 2492.0,88.5 2493.0,89.5 2494.0,89.5 2495.0,89.5 2496.0,89.5 2497.0,89.5 2498.0,89.5 2499.0,89.5 2500.0,89.5 2501.0,89.5 2502.0,89.5 2503.0,89.5 2504.0,90.7 2505.0,90.7 2506.0,90.7 2507.0,90.7 2508.0,90.7 2509.0,90.7 2510.0,90.7 2511.0,90.7 2512.0,90.7 2513.0,90.7 2514.0,90.7 2515.0,90.7 2516.0,90.7 2517.0,90.7 2518.0,90.7 2519.0,90.7 2520.0,90.7 2521.0,90.7 2522.0,90.7 2523.0,90.7 2524.0,90.7 2525.0,90.7 2526.0,90.7 2527.0,90.7 2528.0,90.7 2529.0,90.7 2530.0,90.7 2531.0,90.7 2532.0,90.7 2533.0,90.7 2534.0,90.7 2535.0,90.7 2536.0,90.7 2537.0,90.7 2538.0,90.7 2539.0,90.7 2540.0,90.7 2541.0,90.7 2542.0,90.7 2543.0,90.7 2544.0,90.7 2545.0,90.7 2546.0,90.7 2547.0,90.7 2548.0,90.7 2549.0,90.7 2550.0,90.7 2551.0,90.7 2552.0,90.7 2553.0,90.7 2554.0,89.5 2555.0,89.5 2556.0,89.5 2557.0,89.5 2558.0,89.5 2559.0,89.5 2560.0,89.5 2561.0,89.5 2562.0,89.5 2563.0,89.5 2564.0,89.5 2565.0,88.5 2566.0,88.5 2567.0,88.5 2568.0,88.5 2569.0,88.5 2570.0,88.5 2571.0,88.5 2572.0,88.5 2573.0,88.5 2574.0,88.5 2575.0,88.5 2576.0,88.5 2577.0,88.5 2578.0,88.5 2579.0,88.5 2580.0,88.5 2581.0,88.5 2582.0,88.5 2583.0,88.5 2584.0,88.5 2585.0,88.5 2586.0,88.5 2587.0,88.5 2588.0,88.5 2589.0,88.5 2590.0,88.5 2591.0,88.5 2592.0,88.5 2593.0,88.5 2594.0,88.5 2595.0,88.5 2596.0,88.5 2597.0,88.5 2598.0,88.5 2599.0,88.5 2600.0,88.5 2601.0,89.5 2602.0,89.5 2603.0,89.5 2604.0,89.5 2605.0,89.5 2606.0,89.5 2607.0,89.5 2608.0,89.5 2609.0,89.5 2610.0,89.5 2611.0,89.5 2612.0,90.7 2613.0,90.7 2614.0,90.7 2615.0,90.7 2616.0,90.7 2617.0,90.7 2618.0,90.7 2619.0,90.7 2620.0,90.7 2621.0,90.7 2622.0,90.7 2623.0,90.7 2624.0,90.7 2625.0,90.7 2626.0,90.7 2627.0,90.7 2628.0,90.7 2629.0,90.7 2630.0,90.7 2631.0,90.7 2632.0,90.7 2633.0,90.7 2634.0,90.7 2635.0,90.7 2636.0,90.7 2637.0,90.7 2638.0,90.7 2639.0,90.7 2640.0,90.7 2641.0,90.7 2642.0,90.7 2643.0,90.7 2644.0,90.7 2645.0,90.7 2646.0,90.7 2647.0,90.7 2648.0,90.7 2649.0,90.7 2650.0,90.7 2651.0,90.7 2652.0,90.7 2653.0,90.7 2654.0,90.7 2655.0,90.7 2656.0,90.7 2657.0,90.7 2658.0,90.7 2659.0,90.7 2660.0,90.7 2661.0,90.7 2662.0,89.5 2663.0,89.5 2664.0,89.5 2665.0,89.5 2666.0,89.5 2667.0,89.5 2668.0,89.5 2669.0,89.5 2670.0,89.5 2671.0,89.5 2672.0,89.5 2673.0,88.5 2674.0,88.5 2675.0,88.5 2676.0,88.5 2677.0,88.5 2678.0,88.5 2679.0,88.5 2680.0,88.5 2681.0,88.5 2682.0,88.5 2683.0,88.5 2684.0,88.5 2685.0,88.5 2686.0,88.5 2687.0,88.5 2688.0,88.5 2689.0,88.5 2690.0,88.5 2691.0,88.5 2692.0,88.5 2693.0,88.5 2694.0,88.5 2695.0,88.5 2696.0,88.5 2697.0,88.5 2698.0,88.5 2699.0,88.5 2700.0,88.5 2701.0,88.5 2702.0,88.5 2703.0,88.5 2704.0,88.5 2705.0,88.5 2706.0,88.5 2707.0,88.5 2708.0,88.5 2709.0,88.5 2710.0,89.5 2711.0,89.5 2712.0,89.5 2713.0,89.5 2714.0,89.5 2715.0,89.5 2716.0,89.5 2717.0,89.5 2718.0,89.5 2719.0,89.5 2720.0,89.5 2721.0,90.7 2722.0,90.7 2723.0,90.7 2724.0,90.7 2725.0,90.7 2726.0,90.7 2727.0,90.7 2728.0,90.7 2729.0,90.7 2730.0,90.7 2731.0,90.7 2732.0,90.7 2733.0,90.7 2734.0,90.7 2735.0,90.7 2736.0,90.7 2737.0,90.7 2738.0,90.7 2739.0,90.7 2740.0,90.7 2741.0,90.7 2742.0,90.7 2743.0,90.7 2744.0,90.7 2745.0,90.7 2746.0,90.7 2747.0,90.7 2748.0,90.7 2749.0,90.7 2750.0,90.7 2751.0,90.7 2752.0,90.7 2753.0,90.7 2754.0,90.7 2755.0,90.7 2756.0,90.7 2757.0,90.7 2758.0,90.7 2759.0,90.7 2760.0,90.7 2761.0,90.7 2762.0,90.7 2763.0,90.7 2764.0,90.7 2765.0,90.7 2766.0,90.7 2767.0,90.7 2768.0,90.7 2769.0,90.7 2770.0,90.7 2771.0,89.5 2772.0,89.5 2773.0,89.5 2774.0,89.5 2775.0,89.5 2776.0,89.5 2777.0,89.5 2778.0,89.5 2779.0,89.5 2780.0,89.5 2781.0,89.5 2782.0,88.5 2783.0,88.5 2784.0,88.5 2785.0,88.5 2786.0,88.5 2787.0,88.5 2788.0,88.5 2789.0,88.5 2790.0,88.5 2791.0,88.5 2792.0,88.5 2793.0,88.5 2794.0,88.5 2795.0,88.5 2796.0,88.5 2797.0,88.5 2798.0,88.5 2799.0,88.5 2800.0,88.5 2801.0,88.5 2802.0,88.5 2803.0,88.5 2804.0,88.5 2805.0,88.5 2806.0,88.5 2807.0,88.5 2808.0,88.5 2809.0,88.5 2810.0,88.5 2811.0,88.5 2812.0,88.5 2813.0,88.5 2814.0,88.5 2815.0,88.5 2816.0,88.5 2817.0,88.5 2818.0,89.5 2819.0,89.5 2820.0,89.5 2821.0,89.5 2822.0,89.5 2823.0,89.5 2824.0,89.5 2825.0,89.5 2826.0,89.5 2827.0,89.5 2828.0,89.5 2829.0,90.7 2830.0,90.7 2831.0,90.7 2832.0,90.7 2833.0,90.7 2834.0,90.7 2835.0,90.7 2836.0,90.7 2837.0,90.7 2838.0,90.7 2839.0,90.7 2840.0,90.7 2841.0,90.7 2842.0,90.7 2843.0,90.7 2844.0,90.7 2845.0,90.7 2846.0,90.7 2847.0,90.7 2848.0,90.7 2849.0,90.7 2850.0,90.7 2851.0,90.7 2852.0,90.7 2853.0,90.7 2854.0,90.7 2855.0,90.7 2856.0,90.7 2857.0,90.7 2858.0,90.7 2859.0,90.7 2860.0,90.7 2861.0,90.7 2862.0,90.7 2863.0,90.7 2864.0,90.7 2865.0,90.7 2866.0,90.7 2867.0,90.7 2868.0,90.7 2869.0,90.7 2870.0,90.7 2871.0,90.7 2872.0,90.7 2873.0,90.7 2874.0,90.7 2875.0,90.7 2876.0,90.7 2877.0,90.7 2878.0,90.7 2879.0,89.5 2880.0,89.5 2881.0,89.5 2882.0,89.5 2883.0,89.5 2884.0,89.5 2885.0,89.5 2886.0,89.5 2887.0,89.5 2888.0,89.5 2889.0,89.5 2890.0,88.5 2891.0,88.5 2892.0,88.5 2893.0,88.5 2894.0,88.5 2895.0,88.5 2896.0,88.5 2897.0,88.5 2898.0,88.5 2899.0,88.5 2900.0,88.5 2901.0,88.5 2902.0,88.5 2903.0,88.5 2904.0,88.5 2905.0,88.5 2906.0,88.5 2907.0,88.5 2908.0,88.5 2909.0,88.5 2910.0,88.5 2911.0,88.5 2912.0,88.5 2913.0,88.5 2914.0,88.5 2915.0,88.5 2916.0,88.5 2917.0,88.5 2918.0,88.5 2919.0,88.5 2920.0,88.5 2921.0,88.5 2922.0,88.5 2923.0,88.5 2924.0,88.5 2925.0,88.5 2926.0,89.5 2927.0,89.5 2928.0,89.5 2929.0,89.5 2930.0,89.5 2931.0,89.5 2932.0,89.5 2933.0,89.5 2934.0,89.5 2935.0,89.5 2936.0,89.5 2937.0,89.5 2938.0,90.7 2939.0,90.7 2940.0,90.7 2941.0,90.7 2942.0,90.7 2943.0,90.7 2944.0,90.7 2945.0,90.7 2946.0,90.7 2947.0,90.7 2948.0,90.7 2949.0,90.7 2950.0,90.7 2951.0,90.7 2952.0,90.7 2953.0,90.7 2954.0,90.7 2955.0,90.7 2956.0,90.7 2957.0,90.7 2958.0,90.7 2959.0,90.7 2960.0,90.7 2961.0,90.7 2962.0,90.7 2963.0,90.7 2964.0,90.7 2965.0,90.7 2966.0,90.7 2967.0,90.7 2968.0,90.7 2969.0,90.7 2970.0,90.7 2971.0,90.7 2972.0,90.7 2973.0,90.7 2974.0,90.7 2975.0,90.7 2976.0,90.7 2977.0,90.7 2978.0,90.7 2979.0,90.7 2980.0,90.7 2981.0,90.7 2982.0,90.7 2983.0,90.7 2984.0,90.7 2985.0,90.7 2986.0,90.7 2987.0,89.5 2988.0,89.5 2989.0,89.5 2990.0,89.5 2991.0,89.5 2992.0,89.5 2993.0,89.5 2994.0,89.5 2995.0,89.5 2996.0,89.5 2997.0,89.5 2998.0,89.5 2999.0,88.5 3000.0,88.5 3001.0,88.5 3002.0,88.5 3003.0,88.5 3004.0,88.5 3005.0,88.5 3006.0,88.5 3007.0,88.5 3008.0,88.5 3009.0,88.5 3010.0,88.5 3011.0,88.5 3012.0,88.5 3013.0,88.5 3014.0,88.5 3015.0,88.5 3016.0,88.5 3017.0,88.5 3018.0,88.5 3019.0,88.5 3020.0,88.5 3021.0,88.5 3022.0,88.5 3023.0,88.5 3024.0,88.5 3025.0,88.5 3026.0,88.5 3027.0,88.5 3028.0,88.5 3029.0,88.5 3030.0,88.5 3031.0,88.5 3032.0,88.5" fill="none" stroke="#ffff00" stroke-width="1.25" shape-rendering="crispEdges"/>
<polyline points="201.0,77.4 202.0,77.4 203.0,78.0 204.0,77.8 205.0,78.4 206.0,78.6 207.0,78.7 208.0,79.5 209.0,79.5 210.0,80.3 211.0,80.5 212.0,81.0 213.0,81.8 214.0,82.7 215.0,82.7 216.0,83.4 217.0,84.4 218.0,85.3 219.0,85.7 220.0,86.2 221.0,87.4 222.0,87.3 223.0,88.7 224.0,88.9 225.0,89.5 226.0,90.2 227.0,91.1 228.0,92.2 229.0,92.4 230.0,93.4 231.0,94.2 232.0,94.6 233.0,95.4 234.0,95.6 235.0,96.2 236.0,97.0 237.0,97.9 238.0,98.2 239.0,98.6 240.0,99.3 241.0,99.7 242.0,100.0 243.0,100.7 244.0,101.0 245.0,100.9 246.0,101.5 247.0,101.7 248.0,102.1 249.0,102.1 250.0,101.9 251.0,102.5 252.0,101.8 253.0,102.1 254.0,102.3 255.0,101.7 256.0,101.8 257.0,101.3 258.0,101.5 259.0,101.4 260.0,100.9 261.0,100.8 262.0,100.0 263.0,99.9 264.0,99.3 265.0,98.9 266.0,98.3 267.0,98.0 268.0,97.5 269.0,96.6 270.0,96.1 271.0,95.0 272.0,94.9 273.0,94.2 274.0,93.8 275.0,92.9 276.0,91.8 277.0,91.2 278.0,90.7 279.0,89.4 280.0,89.1 281.0,88.1 282.0,87.4 283.0,86.6 284.0,86.5 285.0,85.3 286.0,84.7 287.0,84.2 288.0,83.9 289.0,82.7 290.0,82.4 291.0,81.9 292.0,81.6 293.0,81.1 294.0,80.6 295.0,79.7 296.0,79.4 297.0,79.0 298.0,79.0 299.0,78.8 300.0,77.9 301.0,77.6 302.0,77.5 303.0,77.3 304.0,77.4 305.0,77.5 306.0,77.2 307.0,77.0 308.0,77.4 309.0,77.4 310.0,77.7 311.0,78.2 312.0,78.2 313.0,78.3 314.0,78.7 315.0,79.1 316.0,78.9 317.0,80.0 318.0,80.4 319.0,80.9 320.0,81.3 321.0,81.6 322.0,82.1 323.0,82.5 324.0,83.5 325.0,83.7 326.0,84.3 327.0,85.1 328.0,85.7 329.0,86.6 330.0,87.0 331.0,87.7 332.0,88.5 333.0,89.2 334.0,90.1 335.0,90.6 336.0,92.0 337.0,92.5 338.0,92.8 339.0,93.6 340.0,94.3 341.0,95.0 342.0,95.4 343.0,96.6 344.0,97.4 345.0,97.5 346.0,98.1 347.0,98.3 348.0,98.8 349.0,99.4 350.0,99.8 351.0,100.6 352.0,100.4 353.0,100.6 354.0,101.7 355.0,101.6 356.0,101.5 357.0,101.9 358.0,101.7 359.0,102.1 360.0,102.5 361.0,102.4 362.0,102.3 363.0,101.8 364.0,101.8 365.0,101.4 366.0,101.7 367.0,101.3 368.0,101.2 369.0,100.5 370.0,100.1 371.0,100.1 372.0,99.8 373.0,99.3 374.0,98.7 375.0,98.2 376.0,97.6 377.0,96.6 378.0,96.3 379.0,95.5 380.0,94.6 381.0,93.9 382.0,93.5 383.0,92.8 384.0,92.4 385.0,91.9 386.0,90.8 387.0,90.5 388.0,89.8 389.0,89.0 390.0,87.9 391.0,87.0 392.0,86.3 393.0,85.6 394.0,85.0 395.0,84.6 396.0,84.2 397.0,83.5 398.0,82.6 399.0,82.2 400.0,81.8 401.0,80.7 402.0,80.6 403.0,80.4 404.0,79.8 405.0,79.4 406.0,78.8 407.0,78.3 408.0,78.5 409.0,77.9 410.0,78.0 411.0,78.0 412.0,77.4 413.0,77.3 414.0,77.7 415.0,77.5 416.0,77.1 417.0,77.2 418.0,77.3 419.0,78.1 420.0,78.2 421.0,77.9 422.0,78.7 423.0,79.2 424.0,79.3 425.0,79.4 426.0,80.0 427.0,80.1 428.0,80.5 429.0,81.8 430.0,82.1 431.0,82.6 432.0,83.5 433.0,83.7 434.0,84.7 435.0,85.3 436.0,85.5 437.0,86.2 438.0,86.9 439.0,87.6 440.0,88.6 441.0,89.1 442.0,89.9 443.0,90.4 444.0,91.7 445.0,92.0 446.0,92.8 447.0,93.6 448.0,94.5 449.0,94.8 450.0,95.8 451.0,96.1 452.0,96.7 453.0,97.3 454.0,97.5 455.0,98.3 456.0,98.6 457.0,99.0 458.0,100.0 459.0,99.9 460.0,100.6 461.0,101.1 462.0,101.2 463.0,101.3 464.0,101.7 465.0,101.9 466.0,102.2 467.0,101.8 468.0,102.2 469.0,101.9 470.0,101.9 471.0,102.3 472.0,101.9 473.0,101.8 474.0,101.8 475.0,101.7 476.0,101.0 477.0,100.9 478.0,100.4 479.0,100.1 480.0,99.8 481.0,99.1 482.0,98.7 483.0,98.2 484.0,98.0 485.0,97.2 486.0,96.8 487.0,96.2 488.0,95.0 489.0,94.6 490.0,94.3 491.0,93.5 492.0,92.2 493.0,91.5 494.0,91.1 495.0,90.1 496.0,89.5 497.0,88.6 498.0,88.4 499.0,87.8 500.0,87.1 501.0,85.9 502.0,85.6 503.0,84.9 504.0,83.9 505.0,83.8 506.0,83.3 507.0,82.1 508.0,82.1 509.0,81.1 510.0,80.7 511.0,80.6 512.0,80.1 513.0,79.1 514.0,78.9 515.0,78.7 516.0,78.2 517.0,77.8 518.0,77.7 519.0,77.9 520.0,77.2 521.0,77.5 522.0,77.3 523.0,77.0 524.0,77.2 525.0,77.5 526.0,77.5 527.0,77.3 528.0,78.3 529.0,78.3 530.0,78.7 531.0,78.3 532.0,78.8 533.0,79.0 534.0,80.0 535.0,80.0 536.0,80.4 537.0,81.2 538.0,82.1 539.0,82.6 540.0,82.7 541.0,83.2 542.0,84.5 543.0,84.8 544.0,85.6 545.0,85.8 546.0,86.5 547.0,87.7 548.0,88.2 549.0,88.6 550.0,90.0 551.0,90.5 552.0,91.4 553.0,91.5 554.0,92.8 555.0,92.9 556.0,94.2 557.0,94.5 558.0,95.1 559.0,95.9 560.0,96.8 561.0,96.9 562.0,97.3 563.0,98.2 564.0,98.5 565.0,98.9 566.0,99.4 567.0,99.7 568.0,100.2 569.0,100.6 570.0,100.9 571.0,101.6 572.0,101.4 573.0,101.8 574.0,101.7 575.0,101.9 576.0,101.7 577.0,101.9 578.0,101.7 579.0,102.3 580.0,102.0 581.0,101.6 582.0,101.7 583.0,101.8 584.0,100.9 585.0,101.2 586.0,100.5 587.0,100.2 588.0,100.1 589.0,99.3 590.0,98.9 591.0,98.5 592.0,98.2 593.0,97.2 594.0,97.0 595.0,96.3 596.0,95.6 597.0,94.8 598.0,94.1 599.0,93.1 600.0,92.5 601.0,91.8 602.0,91.6 603.0,90.5 604.0,89.7 605.0,88.9 606.0,88.8 607.0,88.1 608.0,87.2 609.0,86.2 610.0,85.5 611.0,84.9 612.0,84.4 613.0,83.5 614.0,83.1 615.0,82.4 616.0,82.3 617.0,81.8 618.0,80.9 619.0,80.2 620.0,80.3 621.0,79.4 622.0,79.0 623.0,78.4 624.0,78.4 625.0,78.2 626.0,78.0 627.0,77.5 628.0,77.6 629.0,77.1 630.0,77.2 631.0,77.0 632.0,77.3 633.0,77.0 634.0,77.1 635.0,77.5 636.0,77.6 637.0,78.1 638.0,78.3 639.0,78.7 640.0,79.0 641.0,79.4 642.0,79.9 643.0,80.0 644.0,80.4 645.0,81.4 646.0,81.3 647.0,82.3 648.0,82.8 649.0,82.9 650.0,84.2 651.0,84.8 652.0,85.3 653.0,86.1 654.0,86.8 655.0,87.0 656.0,88.0 657.0,88.7 658.0,89.7 659.0,90.4 660.0,91.1 661.0,91.6 662.0,92.6 663.0,93.1 664.0,93.8 665.0,94.1 666.0,94.6 667.0,95.3 668.0,96.1 669.0,96.5 670.0,97.7 671.0,98.0 672.0,98.6 673.0,99.1 674.0,99.6 675.0,99.9 676.0,99.9 677.0,100.9 678.0,101.2 679.0,101.3 680.0,101.5 681.0,101.8 682.0,101.5 683.0,102.2 684.0,101.9 685.0,101.8 686.0,102.0 687.0,102.3 688.0,101.8 689.0,102.1 690.0,102.1 691.0,101.5 692.0,101.2 693.0,101.0 694.0,100.9 695.0,100.6 696.0,100.1 697.0,99.7 698.0,98.7 699.0,98.3 700.0,97.9 701.0,97.7 702.0,96.8 703.0,96.4 704.0,95.4 705.0,94.8 706.0,94.3 707.0,93.9 708.0,93.2 709.0,92.5 710.0,91.5 711.0,91.0 712.0,90.2 713.0,89.5 714.0,88.5 715.0,88.4 716.0,87.2 717.0,87.1 718.0,86.3 719.0,84.9 720.0,84.6 721.0,84.3 722.0,83.8 723.0,82.7 724.0,82.0 725.0,81.4 726.0,81.5 727.0,80.4 728.0,80.2 729.0,79.4 730.0,79.3 731.0,79.3 732.0,78.3 733.0,78.6 734.0,78.1 735.0,78.1 736.0,77.8 737.0,77.3 738.0,77.7 739.0,77.4 740.0,77.0 741.0,77.0 742.0,77.4 743.0,77.5 744.0,77.6 745.0,77.6 746.0,78.0 747.0,78.3 748.0,79.0 749.0,78.7 750.0,79.7 751.0,80.1 752.0,80.0 753.0,81.1 754.0,81.5 755.0,82.2 756.0,82.3 757.0,82.9 758.0,83.5 759.0,84.7 760.0,85.0 761.0,85.5 762.0,86.2 763.0,86.8 764.0,87.3 765.0,88.1 766.0,89.4 767.0,89.7 768.0,90.9 769.0,91.1 770.0,91.8 771.0,92.7 772.0,93.1 773.0,93.9 774.0,95.1 775.0,95.7 776.0,96.2 777.0,96.7 778.0,97.5 779.0,98.1 780.0,98.3 781.0,99.0 782.0,98.9 783.0,99.9 784.0,100.1 785.0,100.7 786.0,101.0 787.0,101.0 788.0,101.0 789.0,102.0 790.0,101.5 791.0,101.9 792.0,101.9 793.0,102.0 794.0,102.3 795.0,102.5 796.0,101.9 797.0,102.1 798.0,101.7 799.0,101.7 800.0,101.3 801.0,100.9 802.0,100.6 803.0,100.3 804.0,100.4 805.0,99.7 806.0,99.0 807.0,99.1 808.0,98.7 809.0,97.7 810.0,96.9 811.0,96.4 812.0,95.7 813.0,95.2 814.0,94.4 815.0,93.8 816.0,93.2 817.0,92.7 818.0,92.3 819.0,91.5 820.0,90.5 821.0,89.8 822.0,89.1 823.0,88.3 824.0,87.5 825.0,86.6 826.0,86.1 827.0,86.0 828.0,84.6 829.0,84.3 830.0,83.7 831.0,83.3 832.0,82.2 833.0,81.7 834.0,81.1 835.0,80.7 836.0,80.3 837.0,80.2 838.0,79.7 839.0,79.4 840.0,78.3 841.0,78.0 842.0,78.3 843.0,78.2 844.0,77.7 845.0,77.6 846.0,77.1 847.0,77.3 848.0,77.7 849.0,77.6 850.0,77.7 851.0,77.9 852.0,77.4 853.0,77.5 854.0,77.8 855.0,78.3 856.0,78.7 857.0,79.3 858.0,79.5 859.0,79.8 860.0,80.4 861.0,80.6 862.0,81.2 863.0,81.3 864.0,82.4 865.0,82.6 866.0,83.7 867.0,84.1 868.0,84.5 869.0,85.0 870.0,85.8 871.0,86.8 872.0,87.6 873.0,87.8 874.0,88.5 875.0,89.6 876.0,90.3 877.0,90.9 878.0,91.5 879.0,92.5 880.0,92.7 881.0,93.6 882.0,94.4 883.0,95.5 884.0,95.9 885.0,96.7 886.0,96.9 887.0,97.3 888.0,97.9 889.0,99.0 890.0,99.2 891.0,99.4 892.0,99.6 893.0,100.4 894.0,100.8 895.0,101.0 896.0,101.1 897.0,101.7 898.0,102.1 899.0,101.7 900.0,101.7 901.0,102.0 902.0,102.1 903.0,102.3 904.0,101.9 905.0,102.2 906.0,102.1 907.0,101.7 908.0,101.3 909.0,101.6 910.0,100.8 911.0,100.9 912.0,100.1 913.0,99.7 914.0,99.7 915.0,98.8 916.0,98.9 917.0,98.0 918.0,97.2 919.0,96.6 920.0,96.2 921.0,95.7 922.0,95.3 923.0,94.0 924.0,93.6 925.0,92.7 926.0,92.6 927.0,91.3 928.0,90.5 929.0,89.8 930.0,89.3 931.0,89.0 932.0,88.3 933.0,87.4 934.0,87.0 935.0,86.2 936.0,85.1 937.0,84.3 938.0,84.2 939.0,83.5 940.0,82.3 941.0,82.2 942.0,81.4 943.0,80.9 944.0,80.4 945.0,79.8 946.0,79.2 947.0,79.0 948.0,78.7 949.0,78.9 950.0,77.9 951.0,78.4 952.0,77.6 953.0,77.5 954.0,77.7 955.0,77.7 956.0,77.3 957.0,77.0 958.0,77.4 959.0,77.4 960.0,77.9 961.0,77.5 962.0,77.8 963.0,78.5 964.0,78.1 965.0,78.7 966.0,79.4 967.0,79.7 968.0,79.6 969.0,80.0 970.0,80.6 971.0,81.8 972.0,81.8 973.0,82.7 974.0,83.5 975.0,83.6 976.0,84.2 977.0,85.4 978.0,85.8 979.0,86.2 980.0,87.3 981.0,87.7 982.0,88.4 983.0,88.9 984.0,90.2 985.0,91.0 986.0,91.5 987.0,92.5 988.0,92.4 989.0,93.3 990.0,94.2 991.0,95.2 992.0,95.9 993.0,96.0 994.0,96.5 995.0,97.2 996.0,97.9 997.0,98.7 998.0,98.6 999.0,99.6 1000.0,100.0 1001.0,100.5 1002.0,100.8 1003.0,101.0 1004.0,101.1 1005.0,101.3 1006.0,101.6 1007.0,102.1 1008.0,101.7 1009.0,101.8 1010.0,102.3 1011.0,101.9 1012.0,101.8 1013.0,101.7 1014.0,102.0 1015.0,101.6 1016.0,102.0 1017.0,101.7 1018.0,101.5 1019.0,100.6 1020.0,100.1 1021.0,99.7 1022.0,99.6 1023.0,99.3 1024.0,98.7 1025.0,98.0 1026.0,97.6 1027.0,97.2 1028.0,96.6 1029.0,96.1 1030.0,95.5 1031.0,94.7 1032.0,93.6 1033.0,93.5 1034.0,92.4 1035.0,91.9 1036.0,91.0 1037.0,90.6 1038.0,89.4 1039.0,88.8 1040.0,88.0 1041.0,87.3 1042.0,87.1 1043.0,86.2 1044.0,85.3 1045.0,84.7 1046.0,84.5 1047.0,83.5 1048.0,82.7 1049.0,82.6 1050.0,81.9 1051.0,81.6 1052.0,80.4 1053.0,80.2 1054.0,80.0 1055.0,79.6 1056.0,79.3 1057.0,78.3 1058.0,78.2 1059.0,77.8 1060.0,77.6 1061.0,78.1 1062.0,77.6 1063.0,77.8 1064.0,77.3 1065.0,77.6 1066.0,77.3 1067.0,77.2 1068.0,77.8 1069.0,78.0 1070.0,77.6 1071.0,78.2 1072.0,78.5 1073.0,78.4 1074.0,78.9 1075.0,79.1 1076.0,79.5 1077.0,80.0 1078.0,80.8 1079.0,81.3 1080.0,81.5 1081.0,81.9 1082.0,82.8 1083.0,83.7 1084.0,83.9 1085.0,84.6 1086.0,85.2 1087.0,86.4 1088.0,86.9 1089.0,87.2 1090.0,87.9 1091.0,88.9 1092.0,89.7 1093.0,90.5 1094.0,90.8 1095.0,91.6 1096.0,92.7 1097.0,93.2 1098.0,93.7 1099.0,94.4 1100.0,95.6 1101.0,95.7 1102.0,96.5 1103.0,97.0 1104.0,97.6 1105.0,98.5 1106.0,99.1 1107.0,99.1 1108.0,99.4 1109.0,100.2 1110.0,100.2 1111.0,100.4 1112.0,101.4 1113.0,101.3 1114.0,101.8 1115.0,101.7 1116.0,102.2 1117.0,102.0 1118.0,101.9 1119.0,101.8 1120.0,102.2 1121.0,102.2 1122.0,102.3 1123.0,101.5 1124.0,101.8 1125.0,101.4 1126.0,101.2 1127.0,100.6 1128.0,100.4 1129.0,100.2 1130.0,100.1 1131.0,99.0 1132.0,98.9 1133.0,98.6 1134.0,98.2 1135.0,97.1 1136.0,96.4 1137.0,96.5 1138.0,95.9 1139.0,94.8 1140.0,93.8 1141.0,93.8 1142.0,92.7 1143.0,92.4 1144.0,91.5 1145.0,90.9 1146.0,89.7 1147.0,89.5 1148.0,88.3 1149.0,87.7 1150.0,87.4 1151.0,86.7 1152.0,85.5 1153.0,84.8 1154.0,84.3 1155.0,83.8 1156.0,83.0 1157.0,82.2 1158.0,81.8 1159.0,81.6 1160.0,81.2 1161.0,80.1 1162.0,80.0 1163.0,79.7 1164.0,78.8 1165.0,79.1 1166.0,78.2 1167.0,78.3 1168.0,78.0 1169.0,77.9 1170.0,77.4 1171.0,77.4 1172.0,77.5 1173.0,77.3 1174.0,77.5 1175.0,77.4 1176.0,77.4 1177.0,77.2 1178.0,77.9 1179.0,78.0 1180.0,78.0 1181.0,78.7 1182.0,79.1 1183.0,79.2 1184.0,79.4 1185.0,80.0 1186.0,80.2 1187.0,80.7 1188.0,81.5 1189.0,81.8 1190.0,82.6 1191.0,83.3 1192.0,83.5 1193.0,84.6 1194.0,84.9 1195.0,86.1 1196.0,86.8 1197.0,87.3 1198.0,87.6 1199.0,88.7 1200.0,89.3 1201.0,90.5 1202.0,90.5 1203.0,91.8 1204.0,92.6 1205.0,93.1 1206.0,93.9 1207.0,94.1 1208.0,95.4 1209.0,95.6 1210.0,96.6 1211.0,97.2 1212.0,97.1 1213.0,98.2 1214.0,98.8 1215.0,98.6 1216.0,99.3 1217.0,100.1 1218.0,100.0 1219.0,101.0 1220.0,100.8 1221.0,101.5 1222.0,101.2 1223.0,101.7 1224.0,102.2 1225.0,101.8 1226.0,101.9 1227.0,102.1 1228.0,102.0 1229.0,101.7 1230.0,101.8 1231.0,101.6 1232.0,102.1 1233.0,101.7 1234.0,101.6 1235.0,100.8 1236.0,100.9 1237.0,100.0 1238.0,100.0 1239.0,99.6 1240.0,99.0 1241.0,98.9 1242.0,98.1 1243.0,97.6 1244.0,97.3 1245.0,96.0 1246.0,96.1 1247.0,95.2 1248.0,94.4 1249.0,94.0 1250.0,92.9 1251.0,92.8 1252.0,91.7 1253.0,90.9 1254.0,90.5 1255.0,89.5 1256.0,88.6 1257.0,88.3 1258.0,87.0 1259.0,86.9 1260.0,85.8 1261.0,85.4 1262.0,85.0 1263.0,84.1 1264.0,83.5 1265.0,82.6 1266.0,81.8 1267.0,81.3 1268.0,80.8 1269.0,80.7 1270.0,80.1 1271.0,79.7 1272.0,79.6 1273.0,78.6 1274.0,78.4 1275.0,78.4 1276.0,77.7 1277.0,77.4 1278.0,77.5 1279.0,77.2 1280.0,77.3 1281.0,77.1 1282.0,77.4 1283.0,77.5 1284.0,77.2 1285.0,77.7 1286.0,77.7 1287.0,77.6 1288.0,78.5 1289.0,78.2 1290.0,78.4 1291.0,78.7 1292.0,79.6 1293.0,80.2 1294.0,80.5 1295.0,80.7 1296.0,81.1 1297.0,81.5 1298.0,82.5 1299.0,83.1 1300.0,83.5 1301.0,84.4 1302.0,84.9 1303.0,85.9 1304.0,86.5 1305.0,86.8 1306.0,88.0 1307.0,88.0 1308.0,89.1 1309.0,89.7 1310.0,90.3 1311.0,90.9 1312.0,92.2 1313.0,92.3 1314.0,93.4 1315.0,94.4 1316.0,94.4 1317.0,95.1 1318.0,96.1 1319.0,96.6 1320.0,97.3 1321.0,98.0 1322.0,98.0 1323.0,98.6 1324.0,99.1 1325.0,99.4 1326.0,100.4 1327.0,100.7 1328.0,101.0 1329.0,100.7 1330.0,101.7 1331.0,101.8 1332.0,101.8 1333.0,102.2 1334.0,102.0 1335.0,101.9 1336.0,101.8 1337.0,101.9 1338.0,101.7 1339.0,101.8 1340.0,102.0 1341.0,101.8 1342.0,101.7 1343.0,101.3 1344.0,100.7 1345.0,100.5 1346.0,100.1 1347.0,99.9 1348.0,99.3 1349.0,98.6 1350.0,98.4 1351.0,98.1 1352.0,97.0 1353.0,96.9 1354.0,95.6 1355.0,95.2 1356.0,94.5 1357.0,94.2 1358.0,93.7 1359.0,92.9 1360.0,91.8 1361.0,91.6 1362.0,90.4 1363.0,89.6 1364.0,89.4 1365.0,88.5 1366.0,87.8 1367.0,87.1 1368.0,86.7 1369.0,85.6 1370.0,85.2 1371.0,84.4 1372.0,83.9 1373.0,83.0 1374.0,82.6 1375.0,81.9 1376.0,81.2 1377.0,80.6 1378.0,80.4 1379.0,79.5 1380.0,79.8 1381.0,78.8 1382.0,78.3 1383.0,78.1 1384.0,78.5 1385.0,77.8 1386.0,77.4 1387.0,77.2 1388.0,77.1 1389.0,77.5 1390.0,77.5 1391.0,77.5 1392.0,77.6 1393.0,77.2 1394.0,77.7 1395.0,77.7 1396.0,78.3 1397.0,78.6 1398.0,78.9 1399.0,78.6 1400.0,79.6 1401.0,80.0 1402.0,80.5 1403.0,80.3 1404.0,80.9 1405.0,81.3 1406.0,81.8 1407.0,83.1 1408.0,83.6 1409.0,84.1 1410.0,84.9 1411.0,85.4 1412.0,85.8 1413.0,86.4 1414.0,87.1 1415.0,88.3 1416.0,88.6 1417.0,89.4 1418.0,90.2 1419.0,90.6 1420.0,91.5 1421.0,92.2 1422.0,93.3 1423.0,93.7 1424.0,94.3 1425.0,95.5 1426.0,95.7 1427.0,96.6 1428.0,97.1 1429.0,97.2 1430.0,98.0 1431.0,98.5 1432.0,99.3 1433.0,99.4 1434.0,100.1 1435.0,100.4 1436.0,100.5 1437.0,101.3 1438.0,101.0 1439.0,101.8 1440.0,101.5 1441.0,101.5 1442.0,101.8 1443.0,102.3 1444.0,102.5 1445.0,101.7 1446.0,102.1 1447.0,102.0 1448.0,102.1 1449.0,101.5 1450.0,101.5 1451.0,101.1 1452.0,101.2 1453.0,100.4 1454.0,100.6 1455.0,99.7 1456.0,99.2 1457.0,99.1 1458.0,98.5 1459.0,97.7 1460.0,97.5 1461.0,96.5 1462.0,96.5 1463.0,95.8 1464.0,95.2 1465.0,94.4 1466.0,93.5 1467.0,92.9 1468.0,92.2 1469.0,91.9 1470.0,90.5 1471.0,90.4 1472.0,89.0 1473.0,88.4 1474.0,87.8 1475.0,87.6 1476.0,86.6 1477.0,85.8 1478.0,85.5 1479.0,84.3 1480.0,83.9 1481.0,83.3 1482.0,82.9 1483.0,82.3 1484.0,81.6 1485.0,80.9 1486.0,80.4 1487.0,79.8 1488.0,79.9 1489.0,79.4 1490.0,79.1 1491.0,78.3 1492.0,78.2 1493.0,78.2 1494.0,77.9 1495.0,77.3 1496.0,77.5 1497.0,77.7 1498.0,77.1 1499.0,77.1 1500.0,77.2 1501.0,77.6 1502.0,77.9 1503.0,77.5 1504.0,77.7 1505.0,78.0 1506.0,78.3 1507.0,78.8 1508.0,78.9 1509.0,79.4 1510.0,79.7 1511.0,80.8 1512.0,81.1 1513.0,81.1 1514.0,82.3 1515.0,82.2 1516.0,83.0 1517.0,84.1 1518.0,84.6 1519.0,85.2 1520.0,85.7 1521.0,86.2 1522.0,87.2 1523.0,87.5 1524.0,88.3 1525.0,89.2 1526.0,89.6 1527.0,90.6 1528.0,91.6 1529.0,92.3 1530.0,92.8 1531.0,93.6 1532.0,94.1 1533.0,94.6 1534.0,95.6 1535.0,96.0 1536.0,96.9 1537.0,97.6 1538.0,97.8 1539.0,98.4 1540.0,99.1 1541.0,99.3 1542.0,99.6 1543.0,100.4 1544.0,100.9 1545.0,101.1 1546.0,101.4 1547.0,101.7 1548.0,101.8 1549.0,102.0 1550.0,102.0 1551.0,101.9 1552.0,102.2 1553.0,101.8 1554.0,102.1 1555.0,102.3 1556.0,102.1 1557.0,101.9 1558.0,101.4 1559.0,101.3 1560.0,101.0 1561.0,100.9 1562.0,100.4 1563.0,100.2 1564.0,100.0 1565.0,98.9 1566.0,98.8 1567.0,98.4 1568.0,97.6 1569.0,97.1 1570.0,96.9 1571.0,95.5 1572.0,95.3 1573.0,94.3 1574.0,94.1 1575.0,93.6 1576.0,92.5 1577.0,91.5 1578.0,91.2 1579.0,90.4 1580.0,89.9 1581.0,89.0 1582.0,88.4 1583.0,87.8 1584.0,86.8 1585.0,86.1 1586.0,85.8 1587.0,84.6 1588.0,84.3 1589.0,83.4 1590.0,83.1 1591.0,82.0 1592.0,82.1 1593.0,81.1 1594.0,80.4 1595.0,80.1 1596.0,79.7 1597.0,79.0 1598.0,78.9 1599.0,78.6 1600.0,78.5 1601.0,78.0 1602.0,77.7 1603.0,77.5 1604.0,77.7 1605.0,77.8 1606.0,77.4 1607.0,77.1 1608.0,77.6 1609.0,77.3 1610.0,77.3 1611.0,77.4 1612.0,78.1 1613.0,78.3 1614.0,78.5 1615.0,78.6 1616.0,79.0 1617.0,79.2 1618.0,80.2 1619.0,80.1 1620.0,80.8 1621.0,81.5 1622.0,82.0 1623.0,82.3 1624.0,82.7 1625.0,83.5 1626.0,83.8 1627.0,85.1 1628.0,85.3 1629.0,86.4 1630.0,86.6 1631.0,87.4 1632.0,88.0 1633.0,88.9 1634.0,89.4 1635.0,90.0 1636.0,91.3 1637.0,91.6 1638.0,92.3 1639.0,93.1 1640.0,93.9 1641.0,94.5 1642.0,95.3 1643.0,96.0 1644.0,96.4 1645.0,97.4 1646.0,97.9 1647.0,97.8 1648.0,99.0 1649.0,99.5 1650.0,99.9 1651.0,99.8 1652.0,100.7 1653.0,100.9 1654.0,100.7 1655.0,101.0 1656.0,102.0 1657.0,101.9 1658.0,101.7 1659.0,101.7 1660.0,101.8 1661.0,101.9 1662.0,102.4 1663.0,102.0 1664.0,101.7 1665.0,102.2 1666.0,101.9 1667.0,101.2 1668.0,101.5 1669.0,101.0 1670.0,100.8 1671.0,100.3 1672.0,100.1 1673.0,99.6 1674.0,99.2 1675.0,98.1 1676.0,98.0 1677.0,97.3 1678.0,96.9 1679.0,96.1 1680.0,95.8 1681.0,94.9 1682.0,94.0 1683.0,93.3 1684.0,92.5 1685.0,92.1 1686.0,91.0 1687.0,90.7 1688.0,89.7 1689.0,89.2 1690.0,88.5 1691.0,87.8 1692.0,87.4 1693.0,86.0 1694.0,86.0 1695.0,85.0 1696.0,84.4 1697.0,83.9 1698.0,83.4 1699.0,82.4 1700.0,81.9 1701.0,81.8 1702.0,80.6 1703.0,80.5 1704.0,80.1 1705.0,79.2 1706.0,79.2 1707.0,78.9 1708.0,78.8 1709.0,78.1 1710.0,78.3 1711.0,77.8 1712.0,77.6 1713.0,77.8 1714.0,77.0 1715.0,77.5 1716.0,77.5 1717.0,77.3 1718.0,77.8 1719.0,77.5 1720.0,77.8 1721.0,78.0 1722.0,78.5 1723.0,78.3 1724.0,78.8 1725.0,79.2 1726.0,79.7 1727.0,80.3 1728.0,80.3 1729.0,81.3 1730.0,81.5 1731.0,82.1 1732.0,82.5 1733.0,83.3 1734.0,84.3 1735.0,84.7 1736.0,85.4 1737.0,85.7 1738.0,86.4 1739.0,87.1 1740.0,88.0 1741.0,88.8 1742.0,89.6 1743.0,89.7 1744.0,91.0 1745.0,91.8 1746.0,92.3 1747.0,92.6 1748.0,93.5 1749.0,93.9 1750.0,94.7 1751.0,96.0 1752.0,96.3 1753.0,97.0 1754.0,97.6 1755.0,98.3 1756.0,98.6 1757.0,99.1 1758.0,99.6 1759.0,100.0 1760.0,100.4 1761.0,100.8 1762.0,100.7 1763.0,101.4 1764.0,101.5 1765.0,101.9 1766.0,101.6 1767.0,101.8 1768.0,101.7 1769.0,102.4 1770.0,102.5 1771.0,102.2 1772.0,101.9 1773.0,102.2 1774.0,102.0 1775.0,101.6 1776.0,101.1 1777.0,100.9 1778.0,100.6 1779.0,100.2 1780.0,99.9 1781.0,99.7 1782.0,99.4 1783.0,98.2 1784.0,98.1 1785.0,97.2 1786.0,96.7 1787.0,96.6 1788.0,95.8 1789.0,95.4 1790.0,94.4 1791.0,93.4 1792.0,93.0 1793.0,92.5 1794.0,92.0 1795.0,91.4 1796.0,90.2 1797.0,89.5 1798.0,88.5 1799.0,88.2 1800.0,87.2 1801.0,86.4 1802.0,85.6 1803.0,84.9 1804.0,84.8 1805.0,83.7 1806.0,83.8 1807.0,82.4 1808.0,82.5 1809.0,81.3 1810.0,80.7 1811.0,80.8 1812.0,79.9 1813.0,79.9 1814.0,79.0 1815.0,78.6 1816.0,78.8 1817.0,78.5 1818.0,78.3 1819.0,78.0 1820.0,77.3 1821.0,77.6 1822.0,77.6 1823.0,77.3 1824.0,77.7 1825.0,77.2 1826.0,77.8 1827.0,77.7 1828.0,77.3 1829.0,77.5 1830.0,78.3 1831.0,78.7 1832.0,78.4 1833.0,78.9 1834.0,79.6 1835.0,79.6 1836.0,80.6 1837.0,80.8 1838.0,81.0 1839.0,81.8 1840.0,82.5 1841.0,83.0 1842.0,83.8 1843.0,84.0 1844.0,85.2 1845.0,85.5 1846.0,86.4 1847.0,87.1 1848.0,87.6 1849.0,88.3 1850.0,89.3 1851.0,90.2 1852.0,90.8 1853.0,91.3 1854.0,91.8 1855.0,92.3 1856.0,93.7 1857.0,94.2 1858.0,95.0 1859.0,95.2 1860.0,96.1 1861.0,97.0 1862.0,97.5 1863.0,97.8 1864.0,98.1 1865.0,98.7 1866.0,99.6 1867.0,99.6 1868.0,100.3 1869.0,100.6 1870.0,101.2 1871.0,101.4 1872.0,101.2 1873.0,101.2 1874.0,101.6 1875.0,101.9 1876.0,102.1 1877.0,102.4 1878.0,102.5 1879.0,101.8 1880.0,102.3 1881.0,102.2 1882.0,102.1 1883.0,101.7 1884.0,101.2 1885.0,101.4 1886.0,101.1 1887.0,100.6 1888.0,100.5 1889.0,99.6 1890.0,98.9 1891.0,98.8 1892.0,98.5 1893.0,97.5 1894.0,97.4 1895.0,96.9 1896.0,95.8 1897.0,95.4 1898.0,94.9 1899.0,94.0 1900.0,93.1 1901.0,92.5 1902.0,92.2 1903.0,91.5 1904.0,90.5 1905.0,89.5 1906.0,89.3 1907.0,88.6 1908.0,87.5 1909.0,87.0 1910.0,86.6 1911.0,85.9 1912.0,84.9 1913.0,84.2 1914.0,83.7 1915.0,82.8 1916.0,82.2 1917.0,81.6 1918.0,81.5 1919.0,80.7 1920.0,80.4 1921.0,79.8 1922.0,79.5 1923.0,78.8 1924.0,78.4 1925.0,78.8 1926.0,78.0 1927.0,77.6 1928.0,77.8 1929.0,77.8 1930.0,77.2 1931.0,77.5 1932.0,77.2 1933.0,77.4 1934.0,77.0 1935.0,77.1 1936.0,78.0 1937.0,78.1 1938.0,78.0 1939.0,78.4 1940.0,78.4 1941.0,79.2 1942.0,79.2 1943.0,80.1 1944.0,80.4 1945.0,80.9 1946.0,81.5 1947.0,81.4 1948.0,81.8 1949.0,82.5 1950.0,83.1 1951.0,83.7 1952.0,84.3 1953.0,85.4 1954.0,86.3 1955.0,86.7 1956.0,87.8 1957.0,88.4 1958.0,88.5 1959.0,89.6 1960.0,90.2 1961.0,90.7 1962.0,92.1 1963.0,92.2 1964.0,93.1 1965.0,93.9 1966.0,94.8 1967.0,95.2 1968.0,95.7 1969.0,96.3 1970.0,96.7 1971.0,97.9 1972.0,98.5 1973.0,98.4 1974.0,98.7 1975.0,99.3 1976.0,99.8 1977.0,100.7 1978.0,101.0 1979.0,101.3 1980.0,100.9 1981.0,101.8 1982.0,101.9 1983.0,102.0 1984.0,102.4 1985.0,101.8 1986.0,101.9 1987.0,102.3 1988.0,102.4 1989.0,102.2 1990.0,101.7 1991.0,101.8 1992.0,101.7 1993.0,100.9 1994.0,100.8 1995.0,100.4 1996.0,100.0 1997.0,99.9 1998.0,99.2 1999.0,98.8 2000.0,98.2 2001.0,98.1 2002.0,97.0 2003.0,97.0 2004.0,96.0 2005.0,95.2 2006.0,95.3 2007.0,94.1 2008.0,94.0 2009.0,93.2 2010.0,92.6 2011.0,91.3 2012.0,90.8 2013.0,89.8 2014.0,89.7 2015.0,88.9 2016.0,88.1 2017.0,87.2 2018.0,86.4 2019.0,86.1 2020.0,85.2 2021.0,84.6 2022.0,83.6 2023.0,83.0 2024.0,82.3 2025.0,82.3 2026.0,81.6 2027.0,80.7 2028.0,80.8 2029.0,79.9 2030.0,79.5 2031.0,78.9 2032.0,78.7 2033.0,78.8 2034.0,78.1 2035.0,77.7 2036.0,77.8 2037.0,77.5 2038.0,77.8 2039.0,77.1 2040.0,77.7 2041.0,77.0 2042.0,77.7 2043.0,77.6 2044.0,77.4 2045.0,77.7 2046.0,77.8 2047.0,78.0 2048.0,78.2 2049.0,78.7 2050.0,79.5 2051.0,79.9 2052.0,80.3 2053.0,80.1 2054.0,80.7 2055.0,81.7 2056.0,81.6 2057.0,82.7 2058.0,83.0 2059.0,84.1 2060.0,84.0 2061.0,85.3 2062.0,85.6 2063.0,86.1 2064.0,86.7 2065.0,88.1 2066.0,88.6 2067.0,89.0 2068.0,89.9 2069.0,91.0 2070.0,91.2 2071.0,92.2 2072.0,92.5 2073.0,93.2 2074.0,94.4 2075.0,95.0 2076.0,95.2 2077.0,95.8 2078.0,96.4 2079.0,97.4 2080.0,97.9 2081.0,98.2 2082.0,98.7 2083.0,99.5 2084.0,100.0 2085.0,100.5 2086.0,100.6 2087.0,100.7 2088.0,100.9 2089.0,101.6 2090.0,101.6 2091.0,102.0 2092.0,101.6 2093.0,102.3 2094.0,102.0 2095.0,102.4 2096.0,102.4 2097.0,102.0 2098.0,101.5 2099.0,102.1 2100.0,101.6 2101.0,101.7 2102.0,100.9 2103.0,100.5 2104.0,100.7 2105.0,99.9 2106.0,99.4 2107.0,99.1 2108.0,98.8 2109.0,97.8 2110.0,97.7 2111.0,97.0 2112.0,96.5 2113.0,95.6 2114.0,95.4 2115.0,94.8 2116.0,94.2 2117.0,93.1 2118.0,92.7 2119.0,91.7 2120.0,91.3 2121.0,90.0 2122.0,90.0 2123.0,89.3 2124.0,88.2 2125.0,87.5 2126.0,86.9 2127.0,86.2 2128.0,85.1 2129.0,85.2 2130.0,83.9 2131.0,83.3 2132.0,82.6 2133.0,82.1 2134.0,82.0 2135.0,80.8 2136.0,80.4 2137.0,80.4 2138.0,79.5 2139.0,79.0 2140.0,79.1 2141.0,78.7 2142.0,78.4 2143.0,78.3 2144.0,77.5 2145.0,78.0 2146.0,77.7 2147.0,77.1 2148.0,77.1 2149.0,77.3 2150.0,77.4 2151.0,77.3 2152.0,77.2 2153.0,77.6 2154.0,77.6 2155.0,78.2 2156.0,78.6 2157.0,78.4 2158.0,79.1 2159.0,79.6 2160.0,79.5 2161.0,80.5 2162.0,81.1 2163.0,81.1 2164.0,81.7 2165.0,82.6 2166.0,82.9 2167.0,83.4 2168.0,84.5 2169.0,85.0 2170.0,85.3 2171.0,85.9 2172.0,86.7 2173.0,87.5 2174.0,88.6 2175.0,89.2 2176.0,90.0 2177.0,90.6 2178.0,91.4 2179.0,91.5 2180.0,92.5 2181.0,93.6 2182.0,94.3 2183.0,94.4 2184.0,95.2 2185.0,96.0 2186.0,96.4 2187.0,97.1 2188.0,97.3 2189.0,98.1 2190.0,98.7 2191.0,98.8 2192.0,99.3 2193.0,100.4 2194.0,100.6 2195.0,101.1 2196.0,101.2 2197.0,101.6 2198.0,101.9 2199.0,102.1 2200.0,101.6 2201.0,102.2 2202.0,101.9 2203.0,102.3 2204.0,102.0 2205.0,102.1 2206.0,102.3 2207.0,101.9 2208.0,101.5 2209.0,101.5 2210.0,101.1 2211.0,101.3 2212.0,100.4 2213.0,100.0 2214.0,99.9 2215.0,99.1 2216.0,99.0 2217.0,98.8 2218.0,97.9 2219.0,97.1 2220.0,96.7 2221.0,96.1 2222.0,95.2 2223.0,94.5 2224.0,93.9 2225.0,93.3 2226.0,92.7 2227.0,91.9 2228.0,91.2 2229.0,90.4 2230.0,90.0 2231.0,89.5 2232.0,88.6 2233.0,87.9 2234.0,87.2 2235.0,86.2 2236.0,85.9 2237.0,85.0 2238.0,84.4 2239.0,83.8 2240.0,83.1 2241.0,82.4 2242.0,81.8 2243.0,81.2 2244.0,80.9 2245.0,80.3 2246.0,80.0 2247.0,79.1 2248.0,79.0 2249.0,79.1 2250.0,78.3 2251.0,78.2 2252.0,77.9 2253.0,77.6 2254.0,78.0 2255.0,77.3 2256.0,77.6 2257.0,77.1 2258.0,77.0 2259.0,77.7 2260.0,77.4 2261.0,77.3 2262.0,77.7 2263.0,77.9 2264.0,78.4 2265.0,78.2 2266.0,78.6 2267.0,79.6 2268.0,79.8 2269.0,79.8 2270.0,80.4 2271.0,80.9 2272.0,81.7 2273.0,82.2 2274.0,82.9 2275.0,83.5 2276.0,83.9 2277.0,84.7 2278.0,85.4 2279.0,86.1 2280.0,86.5 2281.0,87.5 2282.0,88.1 2283.0,89.0 2284.0,89.1 2285.0,90.4 2286.0,90.4 2287.0,91.8 2288.0,92.3 2289.0,92.9 2290.0,94.0 2291.0,94.4 2292.0,94.9 2293.0,95.8 2294.0,96.5 2295.0,96.9 2296.0,97.3 2297.0,97.9 2298.0,98.5 2299.0,99.2 2300.0,99.3 2301.0,99.8 2302.0,100.3 2303.0,100.5 2304.0,100.8 2305.0,101.5 2306.0,101.8 2307.0,101.7 2308.0,101.8 2309.0,101.8 2310.0,101.9 2311.0,101.9 2312.0,102.2 2313.0,102.2 2314.0,101.7 2315.0,102.2 2316.0,101.6 2317.0,101.8 2318.0,101.6 2319.0,101.4 2320.0,100.5 2321.0,100.3 2322.0,100.3 2323.0,99.1 2324.0,98.7 2325.0,98.6 2326.0,98.1 2327.0,97.9 2328.0,97.2 2329.0,96.4 2330.0,96.1 2331.0,95.1 2332.0,94.5 2333.0,93.9 2334.0,93.0 2335.0,92.3 2336.0,91.8 2337.0,90.9 2338.0,90.6 2339.0,89.7 2340.0,88.8 2341.0,87.8 2342.0,87.3 2343.0,86.6 2344.0,86.0 2345.0,85.4 2346.0,85.0 2347.0,84.4 2348.0,83.4 2349.0,82.7 2350.0,82.3 2351.0,82.0 2352.0,81.0 2353.0,80.6 2354.0,80.4 2355.0,79.4 2356.0,79.2 2357.0,79.3 2358.0,78.9 2359.0,78.3 2360.0,77.7 2361.0,78.1 2362.0,77.8 2363.0,77.8 2364.0,77.8 2365.0,77.7 2366.0,77.3 2367.0,77.1 2368.0,77.3 2369.0,77.6 2370.0,77.7 2371.0,77.7 2372.0,77.9 2373.0,78.5 2374.0,78.8 2375.0,79.0 2376.0,79.8 2377.0,80.0 2378.0,80.0 2379.0,80.7 2380.0,81.5 2381.0,81.7 2382.0,82.6 2383.0,82.6 2384.0,83.5 2385.0,84.5 2386.0,85.0 2387.0,85.7 2388.0,86.0 2389.0,87.0 2390.0,87.7 2391.0,88.2 2392.0,89.2 2393.0,89.8 2394.0,90.9 2395.0,91.3 2396.0,91.9 2397.0,92.4 2398.0,93.1 2399.0,94.3 2400.0,94.4 2401.0,95.0 2402.0,95.7 2403.0,96.6 2404.0,97.4 2405.0,97.8 2406.0,98.5 2407.0,98.4 2408.0,98.9 2409.0,99.9 2410.0,100.0 2411.0,100.7 2412.0,100.7 2413.0,100.9 2414.0,101.2 2415.0,101.3 2416.0,102.1 2417.0,102.0 2418.0,101.9 2419.0,102.1 2420.0,102.1 2421.0,101.8 2422.0,102.4 2423.0,102.0 2424.0,102.2 2425.0,101.6 2426.0,101.5 2427.0,100.9 2428.0,100.5 2429.0,100.8 2430.0,100.4 2431.0,99.6 2432.0,99.6 2433.0,99.0 2434.0,98.1 2435.0,97.8 2436.0,97.6 2437.0,96.6 2438.0,96.4 2439.0,95.2 2440.0,94.6 2441.0,94.2 2442.0,93.1 2443.0,92.5 2444.0,92.3 2445.0,91.2 2446.0,90.8 2447.0,89.6 2448.0,88.8 2449.0,88.3 2450.0,87.4 2451.0,87.3 2452.0,86.1 2453.0,85.6 2454.0,84.6 2455.0,84.3 2456.0,83.5 2457.0,82.9 2458.0,82.1 2459.0,81.6 2460.0,81.6 2461.0,80.7 2462.0,80.1 2463.0,79.6 2464.0,79.3 2465.0,78.9 2466.0,78.4 2467.0,78.5 2468.0,78.0 2469.0,77.6 2470.0,77.9 2471.0,77.2 2472.0,77.3 2473.0,77.6 2474.0,77.1 2475.0,77.3 2476.0,77.7 2477.0,77.8 2478.0,77.4 2479.0,77.7 2480.0,78.2 2481.0,78.2 2482.0,79.0 2483.0,78.7 2484.0,79.7 2485.0,79.7 2486.0,79.9 2487.0,80.6 2488.0,80.8 2489.0,81.8 2490.0,82.0 2491.0,83.1 2492.0,83.5 2493.0,83.9 2494.0,84.5 2495.0,85.4 2496.0,85.8 2497.0,87.0 2498.0,87.1 2499.0,88.1 2500.0,88.9 2501.0,89.4 2502.0,90.5 2503.0,90.9 2504.0,91.8 2505.0,92.4 2506.0,92.9 2507.0,93.7 2508.0,94.1 2509.0,94.8 2510.0,96.0 2511.0,96.2 2512.0,97.1 2513.0,97.2 2514.0,98.1 2515.0,98.5 2516.0,99.1 2517.0,99.4 2518.0,99.6 2519.0,100.2 2520.0,100.5 2521.0,100.7 2522.0,101.5 2523.0,101.4 2524.0,101.7 2525.0,102.2 2526.0,102.3 2527.0,102.4 2528.0,102.4 2529.0,101.8 2530.0,101.9 2531.0,101.6 2532.0,102.0 2533.0,101.8 2534.0,101.4 2535.0,101.2 2536.0,101.1 2537.0,100.8 2538.0,100.1 2539.0,100.2 2540.0,99.3 2541.0,99.1 2542.0,98.2 2543.0,97.7 2544.0,97.7 2545.0,97.0 2546.0,96.4 2547.0,95.2 2548.0,94.6 2549.0,94.0 2550.0,93.4 2551.0,92.8 2552.0,92.2 2553.0,91.2 2554.0,90.7 2555.0,90.2 2556.0,89.1 2557.0,88.9 2558.0,88.0 2559.0,87.4 2560.0,86.4 2561.0,85.8 2562.0,85.3 2563.0,84.4 2564.0,83.5 2565.0,83.5 2566.0,82.9 2567.0,81.9 2568.0,81.2 2569.0,81.3 2570.0,80.6 2571.0,79.7 2572.0,79.4 2573.0,78.9 2574.0,79.1 2575.0,78.3 2576.0,78.6 2577.0,78.2 2578.0,77.5 2579.0,77.8 2580.0,77.4 2581.0,77.6 2582.0,77.6 2583.0,77.2 2584.0,77.1 2585.0,77.8 2586.0,77.5 2587.0,78.1 2588.0,78.1 2589.0,78.4 2590.0,78.7 2591.0,78.9 2592.0,79.1 2593.0,79.2 2594.0,80.1 2595.0,80.4 2596.0,80.9 2597.0,81.8 2598.0,81.7 2599.0,82.8 2600.0,82.8 2601.0,83.9 2602.0,84.6 2603.0,84.9 2604.0,85.8 2605.0,86.8 2606.0,87.2 2607.0,87.9 2608.0,88.3 2609.0,88.9 2610.0,89.9 2611.0,90.6 2612.0,91.2 2613.0,92.0 2614.0,92.5 2615.0,93.7 2616.0,94.3 2617.0,94.6 2618.0,95.3 2619.0,96.1 2620.0,96.7 2621.0,97.7 2622.0,97.7 2623.0,98.2 2624.0,99.2 2625.0,99.1 2626.0,99.8 2627.0,100.1 2628.0,100.8 2629.0,100.9 2630.0,101.4 2631.0,101.2 2632.0,101.8 2633.0,101.9 2634.0,102.0 2635.0,102.3 2636.0,102.4 2637.0,101.8 2638.0,102.0 2639.0,101.9 2640.0,101.7 2641.0,101.4 2642.0,101.4 2643.0,101.1 2644.0,101.2 2645.0,100.7 2646.0,100.1 2647.0,99.9 2648.0,99.6 2649.0,99.1 2650.0,98.4 2651.0,97.8 2652.0,97.2 2653.0,97.5 2654.0,96.7 2655.0,95.5 2656.0,95.4 2657.0,95.0 2658.0,94.0 2659.0,92.9 2660.0,92.5 2661.0,91.8 2662.0,90.9 2663.0,90.4 2664.0,89.3 2665.0,89.3 2666.0,88.4 2667.0,87.6 2668.0,87.2 2669.0,86.3 2670.0,85.3 2671.0,84.6 2672.0,83.9 2673.0,83.1 2674.0,83.1 2675.0,82.6 2676.0,81.6 2677.0,81.0 2678.0,80.8 2679.0,80.5 2680.0,80.1 2681.0,79.1 2682.0,79.2 2683.0,78.9 2684.0,78.6 2685.0,78.0 2686.0,77.6 2687.0,77.9 2688.0,77.4 2689.0,77.3 2690.0,77.4 2691.0,77.2 2692.0,77.6 2693.0,77.2 2694.0,77.2 2695.0,77.7 2696.0,78.0 2697.0,78.3 2698.0,78.5 2699.0,79.0 2700.0,79.4 2701.0,79.4 2702.0,79.8 2703.0,80.0 2704.0,80.5 2705.0,81.3 2706.0,81.4 2707.0,82.5 2708.0,82.6 2709.0,83.5 2710.0,84.5 2711.0,84.5 2712.0,85.1 2713.0,86.1 2714.0,86.6 2715.0,87.7 2716.0,87.8 2717.0,89.2 2718.0,90.0 2719.0,90.6 2720.0,91.1 2721.0,91.7 2722.0,92.7 2723.0,93.2 2724.0,93.8 2725.0,94.4 2726.0,95.2 2727.0,96.0 2728.0,96.7 2729.0,97.4 2730.0,97.4 2731.0,98.0 2732.0,98.6 2733.0,99.2 2734.0,99.5 2735.0,99.8 2736.0,100.1 2737.0,100.6 2738.0,101.1 2739.0,101.7 2740.0,101.9 2741.0,102.1 2742.0,102.3 2743.0,102.4 2744.0,102.2 2745.0,102.4 2746.0,101.8 2747.0,102.2 2748.0,102.1 2749.0,101.7 2750.0,101.7 2751.0,101.8 2752.0,101.2 2753.0,101.0 2754.0,100.4 2755.0,100.1 2756.0,100.1 2757.0,99.0 2758.0,98.6 2759.0,98.5 2760.0,97.8 2761.0,97.0 2762.0,96.8 2763.0,96.0 2764.0,95.6 2765.0,94.8 2766.0,94.2 2767.0,93.6 2768.0,92.7 2769.0,91.8 2770.0,91.1 2771.0,91.0 2772.0,90.0 2773.0,88.9 2774.0,88.8 2775.0,87.6 2776.0,86.8 2777.0,86.4 2778.0,85.5 2779.0,85.0 2780.0,84.4 2781.0,83.5 2782.0,83.2 2783.0,82.2 2784.0,82.0 2785.0,81.5 2786.0,80.6 2787.0,80.3 2788.0,79.6 2789.0,79.5 2790.0,79.4 2791.0,78.8 2792.0,78.6 2793.0,78.4 2794.0,77.6 2795.0,78.1 2796.0,77.8 2797.0,77.2 2798.0,77.7 2799.0,77.3 2800.0,77.1 2801.0,77.8 2802.0,77.5 2803.0,77.8 2804.0,77.5 2805.0,78.2 2806.0,77.9 2807.0,78.3 2808.0,78.8 2809.0,78.8 2810.0,79.7 2811.0,79.8 2812.0,80.4 2813.0,81.2 2814.0,81.5 2815.0,82.4 2816.0,82.8 2817.0,83.6 2818.0,83.9 2819.0,84.9 2820.0,85.5 2821.0,85.6 2822.0,86.7 2823.0,87.1 2824.0,88.2 2825.0,88.8 2826.0,89.7 2827.0,89.8 2828.0,90.7 2829.0,91.7 2830.0,92.6 2831.0,93.1 2832.0,93.3 2833.0,94.4 2834.0,94.7 2835.0,95.7 2836.0,96.5 2837.0,96.5 2838.0,97.8 2839.0,98.1 2840.0,98.3 2841.0,98.7 2842.0,99.4 2843.0,100.2 2844.0,100.3 2845.0,100.3 2846.0,100.6 2847.0,100.9 2848.0,101.7 2849.0,101.5 2850.0,101.9 2851.0,101.8 2852.0,102.2 2853.0,102.0 2854.0,101.9 2855.0,102.4 2856.0,102.1 2857.0,102.1 2858.0,102.0 2859.0,101.9 2860.0,100.9 2861.0,100.9 2862.0,100.4 2863.0,100.4 2864.0,100.3 2865.0,99.8 2866.0,98.7 2867.0,98.3 2868.0,98.3 2869.0,97.7 2870.0,96.9 2871.0,96.3 2872.0,95.5 2873.0,95.4 2874.0,94.4 2875.0,94.1 2876.0,93.2 2877.0,92.0 2878.0,91.5 2879.0,90.7 2880.0,90.6 2881.0,89.6 2882.0,88.5 2883.0,87.8 2884.0,87.3 2885.0,86.7 2886.0,86.1 2887.0,85.2 2888.0,84.5 2889.0,83.6 2890.0,83.4 2891.0,82.6 2892.0,81.8 2893.0,81.6 2894.0,81.5 2895.0,80.2 2896.0,79.9 2897.0,79.8 2898.0,79.1 2899.0,78.7 2900.0,78.6 2901.0,78.1 2902.0,78.1 2903.0,77.8 2904.0,78.0 2905.0,77.9 2906.0,77.0 2907.0,77.4 2908.0,77.6 2909.0,77.7 2910.0,77.7 2911.0,77.7 2912.0,77.8 2913.0,77.8 2914.0,78.0 2915.0,78.7 2916.0,79.0 2917.0,79.4 2918.0,79.6 2919.0,79.7 2920.0,80.5 2921.0,81.0 2922.0,81.3 2923.0,82.0 2924.0,82.3 2925.0,83.1 2926.0,83.6 2927.0,83.9 2928.0,84.8 2929.0,85.5 2930.0,86.7 2931.0,87.0 2932.0,87.6 2933.0,88.2 2934.0,88.9 2935.0,89.7 2936.0,90.2 2937.0,90.9 2938.0,92.3 2939.0,92.6 2940.0,93.3 2941.0,94.1 2942.0,94.6 2943.0,95.1 2944.0,95.6 2945.0,96.4 2946.0,97.0 2947.0,97.9 2948.0,98.3 2949.0,99.1 2950.0,99.1 2951.0,100.1 2952.0,100.2 2953.0,100.2 2954.0,100.6 2955.0,101.2 2956.0,101.8 2957.0,101.5 2958.0,102.0 2959.0,101.9 2960.0,102.4 2961.0,101.8 2962.0,102.1 2963.0,102.4 2964.0,101.9 2965.0,101.8 2966.0,101.4 2967.0,101.4 2968.0,101.2 2969.0,101.3 2970.0,100.6 2971.0,100.4 2972.0,99.9 2973.0,99.8 2974.0,99.6 2975.0,98.9 2976.0,98.0 2977.0,97.9 2978.0,97.6 2979.0,96.7 2980.0,95.7 2981.0,95.6 2982.0,95.0 2983.0,93.9 2984.0,93.1 2985.0,92.4 2986.0,92.0 2987.0,91.6 2988.0,90.7 2989.0,90.2 2990.0,88.9 2991.0,88.2 2992.0,87.9 2993.0,87.1 2994.0,86.2 2995.0,85.7 2996.0,84.8 2997.0,83.9 2998.0,83.6 2999.0,82.7 3000.0,82.5 3001.0,81.7 3002.0,81.3 3003.0,80.9 3004.0,80.1 3005.0,79.8 3006.0,79.1 3007.0,79.4 3008.0,78.8 3009.0,78.8 3010.0,77.8 3011.0,78.0 3012.0,77.9 3013.0,77.4 3014.0,77.1 3015.0,77.1 3016.0,77.1 3017.0,77.6 3018.0,77.1 3019.0,77.8 3020.0,77.6 3021.0,77.9 3022.0,78.1 3023.0,78.3 3024.0,78.7 3025.0,79.0 3026.0,79.2 3027.0,79.9 3028.0,79.9 3029.0,80.8 3030.0,81.3 3031.0,81.9 3032.0,82.0" fill="none" stroke="#00f2ff" stroke-width="1.25" shape-rendering="crispEdges"/>
<path d="M2102 49.9 H2127.1 V73.2 L2114.5 80.6 L2102 73.2 Z" fill="#ffff00" stroke="#1c1c30" stroke-width="0.8"/>
<path d="M2107 55.5 H2121 M2114.3 55.5 V75.7" fill="none" stroke="#22222a" stroke-width="1"/>
<rect x="3039" y="58" width="105" height="33" fill="#656b6b"/>
<rect x="3040.2" y="59.2" width="102.6" height="30.6" fill="#515757"/>
<rect x="3041.2" y="60.2" width="100.6" height="28.6" fill="#3a4040"/>
<rect x="3042" y="61" width="99" height="27" fill="#292e2e"/>
<rect x="3039" y="88" width="105" height="32" fill="#656b6b"/>
<rect x="3040.2" y="89.2" width="102.6" height="29.6" fill="#515757"/>
<rect x="3041.2" y="90.2" width="100.6" height="27.6" fill="#3a4040"/>
<rect x="3042" y="91" width="99" height="26" fill="#292e2e"/>
<rect x="3040" y="85.90" width="103" height="5.40" fill="#3a4040"/>
<rect x="3040" y="86.80" width="103" height="3.60" fill="#515757"/>
<rect x="3040" y="87.60" width="103" height="2.00" fill="#656b6b"/>
<text x="3063.2" y="81.9" fill="#d4d6c2" font-size="20" text-anchor="start" textLength="55.8" lengthAdjust="spacingAndGlyphs">Adjust</text>
<text x="3069" y="112.8" fill="#d4d6c2" font-size="20" text-anchor="start" textLength="45" lengthAdjust="spacingAndGlyphs">Reset</text>
<rect x="19" y="117" width="128" height="41" fill="#656b6b"/>
<rect x="20.2" y="118.2" width="125.6" height="38.6" fill="#515757"/>
<rect x="21.2" y="119.2" width="123.6" height="36.6" fill="#3a4040"/>
<rect x="22" y="120" width="122" height="35" fill="#292e2e"/>
<rect x="19" y="155" width="128" height="1594" fill="#656b6b"/>
<rect x="20.2" y="156.2" width="125.6" height="1591.6" fill="#515757"/>
<rect x="21.2" y="157.2" width="123.6" height="1589.6" fill="#3a4040"/>
<rect x="22" y="158" width="122" height="1588" fill="#292e2e"/>
<rect x="20" y="153.30" width="126" height="5.40" fill="#3a4040"/>
<rect x="20" y="154.20" width="126" height="3.60" fill="#515757"/>
<rect x="20" y="155.00" width="126" height="2.00" fill="#656b6b"/>
<text x="60.7" y="146.2" fill="#ffff00" font-size="24" text-anchor="start" textLength="40.5" lengthAdjust="spacingAndGlyphs">CH1</text>
<rect x="19" y="1746" width="128" height="34" fill="#656b6b"/>
<rect x="20.2" y="1747.2" width="125.6" height="31.6" fill="#515757"/>
<rect x="21.2" y="1748.2" width="123.6" height="29.6" fill="#3a4040"/>
<rect x="22" y="1749" width="122" height="28" fill="#292e2e"/>
<rect x="20" y="1745.00" width="126" height="5.40" fill="#3a4040"/>
<rect x="20" y="1745.90" width="126" height="3.60" fill="#515757"/>
<rect x="20" y="1746.70" width="126" height="2.00" fill="#656b6b"/>
<text x="72.9" y="1772.2" fill="#ffff00" font-size="20" text-anchor="start" textLength="21.1" lengthAdjust="spacingAndGlyphs">1V</text>
<rect x="19" y="1777" width="66" height="33" fill="#656b6b"/>
<rect x="20.2" y="1778.2" width="63.6" height="30.6" fill="#515757"/>
<rect x="21.2" y="1779.2" width="61.6" height="28.6" fill="#3a4040"/>
<rect x="22" y="1780" width="60" height="27" fill="#292e2e"/>
<rect x="81" y="1777" width="66" height="33" fill="#656b6b"/>
<rect x="82.2" y="1778.2" width="63.6" height="30.6" fill="#515757"/>
<rect x="83.2" y="1779.2" width="61.6" height="28.6" fill="#3a4040"/>
<rect x="84" y="1780" width="60" height="27" fill="#292e2e"/>
<rect x="20" y="1776.30" width="126" height="5.40" fill="#3a4040"/>
<rect x="20" y="1777.20" width="126" height="3.60" fill="#515757"/>
<rect x="20" y="1778.00" width="126" height="2.00" fill="#656b6b"/>
<rect y="1781" x="80.40" height="27" width="5.00" fill="#3a4040"/>
<rect y="1781" x="81.30" height="27" width="3.20" fill="#515757"/>
<rect y="1781" x="82.00" height="27" width="1.80" fill="#656b6b"/>
<text x="23.3" y="1802.9" fill="#ffff00" font-size="20" text-anchor="start" textLength="55.4" lengthAdjust="spacingAndGlyphs">Adjust</text>
<text x="93.4" y="1802.9" fill="#ffff00" font-size="20" text-anchor="start" textLength="44.4" lengthAdjust="spacingAndGlyphs">Reset</text>
<rect x="3190" y="117" width="128" height="41" fill="#656b6b"/>
<rect x="3191.2" y="118.2" width="125.6" height="38.6" fill="#515757"/>
<rect x="3192.2" y="119.2" width="123.6" height="36.6" fill="#3a4040"/>
<rect x="3193" y="120" width="122" height="35" fill="#292e2e"/>
<rect x="3190" y="155" width="128" height="1594" fill="#656b6b"/>
<rect x="3191.2" y="156.2" width="125.6" height="1591.6" fill="#515757"/>
<rect x="3192.2" y="157.2" width="123.6" height="1589.6" fill="#3a4040"/>
<rect x="3193" y="158" width="122" height="1588" fill="#292e2e"/>
<rect x="3191" y="153.30" width="126" height="5.40" fill="#3a4040"/>
<rect x="3191" y="154.20" width="126" height="3.60" fill="#515757"/>
<rect x="3191" y="155.00" width="126" height="2.00" fill="#656b6b"/>
<text x="3231.5" y="146.2" fill="#00f2ff" font-size="24" text-anchor="start" textLength="43.4" lengthAdjust="spacingAndGlyphs">CH2</text>
<rect x="3190" y="1746" width="128" height="34" fill="#656b6b"/>
<rect x="3191.2" y="1747.2" width="125.6" height="31.6" fill="#515757"/>
<rect x="3192.2" y="1748.2" width="123.6" height="29.6" fill="#3a4040"/>
<rect x="3193" y="1749" width="122" height="28" fill="#292e2e"/>
<rect x="3191" y="1745.00" width="126" height="5.40" fill="#3a4040"/>
<rect x="3191" y="1745.90" width="126" height="3.60" fill="#515757"/>
<rect x="3191" y="1746.70" width="126" height="2.00" fill="#656b6b"/>
<text x="3243.7" y="1772.2" fill="#00f2ff" font-size="20" text-anchor="start" textLength="21.1" lengthAdjust="spacingAndGlyphs">1V</text>
<rect x="3190" y="1777" width="66" height="33" fill="#656b6b"/>
<rect x="3191.2" y="1778.2" width="63.6" height="30.6" fill="#515757"/>
<rect x="3192.2" y="1779.2" width="61.6" height="28.6" fill="#3a4040"/>
<rect x="3193" y="1780" width="60" height="27" fill="#292e2e"/>
<rect x="3252" y="1777" width="66" height="33" fill="#656b6b"/>
<rect x="3253.2" y="1778.2" width="63.6" height="30.6" fill="#515757"/>
<rect x="3254.2" y="1779.2" width="61.6" height="28.6" fill="#3a4040"/>
<rect x="3255" y="1780" width="60" height="27" fill="#292e2e"/>
<rect x="3191" y="1776.30" width="126" height="5.40" fill="#3a4040"/>
<rect x="3191" y="1777.20" width="126" height="3.60" fill="#515757"/>
<rect x="3191" y="1778.00" width="126" height="2.00" fill="#656b6b"/>
<rect y="1781" x="3251.40" height="27" width="5.00" fill="#3a4040"/>
<rect y="1781" x="3252.30" height="27" width="3.20" fill="#515757"/>
<rect y="1781" x="3253.00" height="27" width="1.80" fill="#656b6b"/>
<text x="3194.9" y="1802.9" fill="#00f2ff" font-size="20" text-anchor="start" textLength="54.4" lengthAdjust="spacingAndGlyphs">Adjust</text>
<text x="3263.9" y="1802.9" fill="#00f2ff" font-size="20" text-anchor="start" textLength="44.6" lengthAdjust="spacingAndGlyphs">Reset</text>
<rect x="144" y="177.4" width="1.2" height="1550.0" fill="#ffff00"/>
<rect x="136" y="176.8" width="8.5" height="1.2" fill="#ffff00"/>
<rect x="141" y="207.8" width="3.5" height="1.2" fill="#ffff00"/>
<rect x="141" y="238.8" width="3.5" height="1.2" fill="#ffff00"/>
<rect x="141" y="269.8" width="3.5" height="1.2" fill="#ffff00"/>
<rect x="141" y="300.8" width="3.5" height="1.2" fill="#ffff00"/>
<rect x="136" y="331.8" width="8.5" height="1.2" fill="#ffff00"/>
<rect x="141" y="362.8" width="3.5" height="1.2" fill="#ffff00"/>
<rect x="141" y="393.8" width="3.5" height="1.2" fill="#ffff00"/>
<rect x="141" y="424.8" width="3.5" height="1.2" fill="#ffff00"/>
<rect x="141" y="455.8" width="3.5" height="1.2" fill="#ffff00"/>
<rect x="136" y="486.8" width="8.5" height="1.2" fill="#ffff00"/>
<rect x="141" y="517.8" width="3.5" height="1.2" fill="#ffff00"/>
<rect x="141" y="548.8" width="3.5" height="1.2" fill="#ffff00"/>
<rect x="141" y="579.8" width="3.5" height="1.2" fill="#ffff00"/>
<rect x="141" y="610.8" width="3.5" height="1.2" fill="#ffff00"/>
<rect x="136" y="641.8" width="8.5" height="1.2" fill="#ffff00"/>
<rect x="141" y="672.8" width="3.5" height="1.2" fill="#ffff00"/>
<rect x="141" y="703.8" width="3.5" height="1.2" fill="#ffff00"/>
<rect x="141" y="734.8" width="3.5" height="1.2" fill="#ffff00"/>
<rect x="141" y="765.8" width="3.5" height="1.2" fill="#ffff00"/>
<rect x="136" y="796.8" width="8.5" height="1.2" fill="#ffff00"/>
<rect x="141" y="827.8" width="3.5" height="1.2" fill="#ffff00"/>
<rect x="141" y="858.8" width="3.5" height="1.2" fill="#ffff00"/>
<rect x="141" y="889.8" width="3.5" height="1.2" fill="#ffff00"/>
<rect x="141" y="920.8" width="3.5" height="1.2" fill="#ffff00"/>
<rect x="136" y="951.8" width="8.5" height="1.2" fill="#ffff00"/>
<rect x="141" y="982.8" width="3.5" height="1.2" fill="#ffff00"/>
<rect x="141" y="1013.8" width="3.5" height="1.2" fill="#ffff00"/>
<rect x="141" y="1044.8" width="3.5" height="1.2" fill="#ffff00"/>
<rect x="141" y="1075.8" width="3.5" height="1.2" fill="#ffff00"/>
<rect x="136" y="1106.8" width="8.5" height="1.2" fill="#ffff00"/>
<rect x="141" y="1137.8" width="3.5" height="1.2" fill="#ffff00"/>
<rect x="141" y="1168.8" width="3.5" height="1.2" fill="#ffff00"/>
<rect x="141" y="1199.8" width="3.5" height="1.2" fill="#ffff00"/>
<rect x="141" y="1230.8" width="3.5" height="1.2" fill="#ffff00"/>
<rect x="136" y="1261.8" width="8.5" height="1.2" fill="#ffff00"/>
<rect x="141" y="1292.8" width="3.5" height="1.2" fill="#ffff00"/>
<rect x="141" y="1323.8" width="3.5" height="1.2" fill="#ffff00"/>
<rect x="141" y="1354.8" width="3.5" height="1.2" fill="#ffff00"/>
<rect x="141" y="1385.8" width="3.5" height="1.2" fill="#ffff00"/>
<rect x="136" y="1416.8" width="8.5" height="1.2" fill="#ffff00"/>
<rect x="141" y="1447.8" width="3.5" height="1.2" fill="#ffff00"/>
<rect x="141" y="1478.8" width="3.5" height="1.2" fill="#ffff00"/>
<rect x="141" y="1509.8" width="3.5" height="1.2" fill="#ffff00"/>
<rect x="141" y="1540.8" width="3.5" height="1.2" fill="#ffff00"/>
<rect x="136" y="1571.8" width="8.5" height="1.2" fill="#ffff00"/>
<rect x="141" y="1602.8" width="3.5" height="1.2" fill="#ffff00"/>
<rect x="141" y="1633.8" width="3.5" height="1.2" fill="#ffff00"/>
<rect x="141" y="1664.8" width="3.5" height="1.2" fill="#ffff00"/>
<rect x="141" y="1695.8" width="3.5" height="1.2" fill="#ffff00"/>
<rect x="136" y="1726.8" width="8.5" height="1.2" fill="#ffff00"/>
<text x="130.3" y="187.2" fill="#ffff00" font-size="23.5" text-anchor="end" textLength="55" lengthAdjust="spacingAndGlyphs">5.000</text>
<text x="130.3" y="342.2" fill="#ffff00" font-size="23.5" text-anchor="end" textLength="55" lengthAdjust="spacingAndGlyphs">4.000</text>
<text x="130.3" y="497.2" fill="#ffff00" font-size="23.5" text-anchor="end" textLength="55" lengthAdjust="spacingAndGlyphs">3.000</text>
<text x="130.3" y="652.2" fill="#ffff00" font-size="23.5" text-anchor="end" textLength="55" lengthAdjust="spacingAndGlyphs">2.000</text>
<text x="130.3" y="807.2" fill="#ffff00" font-size="23.5" text-anchor="end" textLength="55" lengthAdjust="spacingAndGlyphs">1.000</text>
<text x="130.3" y="962.2" fill="#ffff00" font-size="23.5" text-anchor="end" textLength="55" lengthAdjust="spacingAndGlyphs">0.000</text>
<text x="130.3" y="1117.2" fill="#ffff00" font-size="23.5" text-anchor="end" textLength="65" lengthAdjust="spacingAndGlyphs">-1.000</text>
<text x="130.3" y="1272.2" fill="#ffff00" font-size="23.5" text-anchor="end" textLength="65" lengthAdjust="spacingAndGlyphs">-2.000</text>
<text x="130.3" y="1427.2" fill="#ffff00" font-size="23.5" text-anchor="end" textLength="65" lengthAdjust="spacingAndGlyphs">-3.000</text>
<text x="130.3" y="1582.2" fill="#ffff00" font-size="23.5" text-anchor="end" textLength="65" lengthAdjust="spacingAndGlyphs">-4.000</text>
<text x="130.3" y="1737.2" fill="#ffff00" font-size="23.5" text-anchor="end" textLength="65" lengthAdjust="spacingAndGlyphs">-5.000</text>
<rect x="3193" y="177.4" width="1.2" height="1550.0" fill="#00f2ff"/>
<rect x="3193" y="176.8" width="8" height="1.2" fill="#00f2ff"/>
<rect x="3193" y="207.8" width="3.5" height="1.2" fill="#00f2ff"/>
<rect x="3193" y="238.8" width="3.5" height="1.2" fill="#00f2ff"/>
<rect x="3193" y="269.8" width="3.5" height="1.2" fill="#00f2ff"/>
<rect x="3193" y="300.8" width="3.5" height="1.2" fill="#00f2ff"/>
<rect x="3193" y="331.8" width="8" height="1.2" fill="#00f2ff"/>
<rect x="3193" y="362.8" width="3.5" height="1.2" fill="#00f2ff"/>
<rect x="3193" y="393.8" width="3.5" height="1.2" fill="#00f2ff"/>
<rect x="3193" y="424.8" width="3.5" height="1.2" fill="#00f2ff"/>
<rect x="3193" y="455.8" width="3.5" height="1.2" fill="#00f2ff"/>
<rect x="3193" y="486.8" width="8" height="1.2" fill="#00f2ff"/>
<rect x="3193" y="517.8" width="3.5" height="1.2" fill="#00f2ff"/>
<rect x="3193" y="548.8" width="3.5" height="1.2" fill="#00f2ff"/>
<rect x="3193" y="579.8" width="3.5" height="1.2" fill="#00f2ff"/>
<rect x="3193" y="610.8" width="3.5" height="1.2" fill="#00f2ff"/>
<rect x="3193" y="641.8" width="8" height="1.2" fill="#00f2ff"/>
<rect x="3193" y="672.8" width="3.5" height="1.2" fill="#00f2ff"/>
<rect x="3193" y="703.8" width="3.5" height="1.2" fill="#00f2ff"/>
<rect x="3193" y="734.8" width="3.5" height="1.2" fill="#00f2ff"/>
<rect x="3193" y="765.8" width="3.5" height="1.2" fill="#00f2ff"/>
<rect x="3193" y="796.8" width="8" height="1.2" fill="#00f2ff"/>
<rect x="3193" y="827.8" width="3.5" height="1.2" fill="#00f2ff"/>
<rect x="3193" y="858.8" width="3.5" height="1.2" fill="#00f2ff"/>
<rect x="3193" y="889.8" width="3.5" height="1.2" fill="#00f2ff"/>
<rect x="3193" y="920.8" width="3.5" height="1.2" fill="#00f2ff"/>
<rect x="3193" y="951.8" width="8" height="1.2" fill="#00f2ff"/>
<rect x="3193" y="982.8" width="3.5" height="1.2" fill="#00f2ff"/>
<rect x="3193" y="1013.8" width="3.5" height="1.2" fill="#00f2ff"/>
<rect x="3193" y="1044.8" width="3.5" height="1.2" fill="#00f2ff"/>
<rect x="3193" y="1075.8" width="3.5" height="1.2" fill="#00f2ff"/>
<rect x="3193" y="1106.8" width="8" height="1.2" fill="#00f2ff"/>
<rect x="3193" y="1137.8" width="3.5" height="1.2" fill="#00f2ff"/>
<rect x="3193" y="1168.8" width="3.5" height="1.2" fill="#00f2ff"/>
<rect x="3193" y="1199.8" width="3.5" height="1.2" fill="#00f2ff"/>
<rect x="3193" y="1230.8" width="3.5" height="1.2" fill="#00f2ff"/>
<rect x="3193" y="1261.8" width="8" height="1.2" fill="#00f2ff"/>
<rect x="3193" y="1292.8" width="3.5" height="1.2" fill="#00f2ff"/>
<rect x="3193" y="1323.8" width="3.5" height="1.2" fill="#00f2ff"/>
<rect x="3193" y="1354.8" width="3.5" height="1.2" fill="#00f2ff"/>
<rect x="3193" y="1385.8" width="3.5" height="1.2" fill="#00f2ff"/>
<rect x="3193" y="1416.8" width="8" height="1.2" fill="#00f2ff"/>
<rect x="3193" y="1447.8" width="3.5" height="1.2" fill="#00f2ff"/>
<rect x="3193" y="1478.8" width="3.5" height="1.2" fill="#00f2ff"/>
<rect x="3193" y="1509.8" width="3.5" height="1.2" fill="#00f2ff"/>
<rect x="3193" y="1540.8" width="3.5" height="1.2" fill="#00f2ff"/>
<rect x="3193" y="1571.8" width="8" height="1.2" fill="#00f2ff"/>
<rect x="3193" y="1602.8" width="3.5" height="1.2" fill="#00f2ff"/>
<rect x="3193" y="1633.8" width="3.5" height="1.2" fill="#00f2ff"/>
<rect x="3193" y="1664.8" width="3.5" height="1.2" fill="#00f2ff"/>
<rect x="3193" y="1695.8" width="3.5" height="1.2" fill="#00f2ff"/>
<rect x="3193" y="1726.8" width="8" height="1.2" fill="#00f2ff"/>
<text x="3205.5" y="187.2" fill="#00f2ff" font-size="23.5" text-anchor="start" textLength="55" lengthAdjust="spacingAndGlyphs">5.000</text>
<text x="3205.5" y="342.2" fill="#00f2ff" font-size="23.5" text-anchor="start" textLength="55" lengthAdjust="spacingAndGlyphs">4.000</text>
<text x="3205.5" y="497.2" fill="#00f2ff" font-size="23.5" text-anchor="start" textLength="55" lengthAdjust="spacingAndGlyphs">3.000</text>
<text x="3205.5" y="652.2" fill="#00f2ff" font-size="23.5" text-anchor="start" textLength="55" lengthAdjust="spacingAndGlyphs">2.000</text>
<text x="3205.5" y="807.2" fill="#00f2ff" font-size="23.5" text-anchor="start" textLength="55" lengthAdjust="spacingAndGlyphs">1.000</text>
<text x="3205.5" y="962.2" fill="#00f2ff" font-size="23.5" text-anchor="start" textLength="55" lengthAdjust="spacingAndGlyphs">0.000</text>
<text x="3205.5" y="1117.2" fill="#00f2ff" font-size="23.5" text-anchor="start" textLength="65" lengthAdjust="spacingAndGlyphs">-1.000</text>
<text x="3205.5" y="1272.2" fill="#00f2ff" font-size="23.5" text-anchor="start" textLength="65" lengthAdjust="spacingAndGlyphs">-2.000</text>
<text x="3205.5" y="1427.2" fill="#00f2ff" font-size="23.5" text-anchor="start" textLength="65" lengthAdjust="spacingAndGlyphs">-3.000</text>
<text x="3205.5" y="1582.2" fill="#00f2ff" font-size="23.5" text-anchor="start" textLength="65" lengthAdjust="spacingAndGlyphs">-4.000</text>
<text x="3205.5" y="1737.2" fill="#00f2ff" font-size="23.5" text-anchor="start" textLength="65" lengthAdjust="spacingAndGlyphs">-5.000</text>
<line x1="22" y1="952.5" x2="61" y2="952.5" stroke="#ffff00" stroke-width="1.3" stroke-dasharray="9 3 4 2 4 2"/>
<line x1="3275.5" y1="952.5" x2="3315" y2="952.5" stroke="#00f2ff" stroke-width="1.3" stroke-dasharray="9 3 4 2 4 2"/>
<path d="M146.3 980.4 L153.5 967.8 H177.2 V993 H153.5 Z" fill="#ffff00"/>
<path d="M151 980.4 H171.8 M171.8 973.3 V987.1" fill="none" stroke="#22222a" stroke-width="1"/>
<rect x="188" y="171" width="2962" height="1562" fill="#656b6b"/>
<rect x="189.2" y="172.2" width="2959.6" height="1559.6" fill="#515757"/>
<rect x="190.2" y="173.2" width="2957.6" height="1557.6" fill="#3a4040"/>
<rect x="191" y="174" width="2956" height="1556" fill="#292e2e"/>
<path d="M272.5 175.9v3M272.5 330.9v3M272.5 485.9v3M272.5 640.9v3M272.5 795.9v3M272.5 950.9v3M272.5 1105.9v3M272.5 1260.9v3M272.5 1415.9v3M272.5 1570.9v3M272.5 1725.9v3M390.5 175.9v3M390.5 330.9v3M390.5 485.9v3M390.5 640.9v3M390.5 795.9v3M390.5 950.9v3M390.5 1105.9v3M390.5 1260.9v3M390.5 1415.9v3M390.5 1570.9v3M390.5 1725.9v3M507.0 177.4h3M508.5 175.9v3M507.0 208.4h3M507.0 239.4h3M507.0 270.4h3M507.0 301.4h3M507.0 332.4h3M508.5 330.9v3M507.0 363.4h3M507.0 394.4h3M507.0 425.4h3M507.0 456.4h3M507.0 487.4h3M508.5 485.9v3M507.0 518.4h3M507.0 549.4h3M507.0 580.4h3M507.0 611.4h3M507.0 642.4h3M508.5 640.9v3M507.0 673.4h3M507.0 704.4h3M507.0 735.4h3M507.0 766.4h3M507.0 797.4h3M508.5 795.9v3M507.0 828.4h3M507.0 859.4h3M507.0 890.4h3M507.0 921.4h3M507.0 952.4h3M508.5 950.9v3M507.0 983.4h3M507.0 1014.4h3M507.0 1045.4h3M507.0 1076.4h3M507.0 1107.4h3M508.5 1105.9v3M507.0 1138.4h3M507.0 1169.4h3M507.0 1200.4h3M507.0 1231.4h3M507.0 1262.4h3M508.5 1260.9v3M507.0 1293.4h3M507.0 1324.4h3M507.0 1355.4h3M507.0 1386.4h3M507.0 1417.4h3M508.5 1415.9v3M507.0 1448.4h3M507.0 1479.4h3M507.0 1510.4h3M507.0 1541.4h3M507.0 1572.4h3M508.5 1570.9v3M507.0 1603.4h3M507.0 1634.4h3M507.0 1665.4h3M507.0 1696.4h3M507.0 1727.4h3M508.5 1725.9v3M626.5 175.9v3M626.5 330.9v3M626.5 485.9v3M626.5 640.9v3M626.5 795.9v3M626.5 950.9v3M626.5 1105.9v3M626.5 1260.9v3M626.5 1415.9v3M626.5 1570.9v3M626.5 1725.9v3M744.5 175.9v3M744.5 330.9v3M744.5 485.9v3M744.5 640.9v3M744.5 795.9v3M744.5 950.9v3M744.5 1105.9v3M744.5 1260.9v3M744.5 1415.9v3M744.5 1570.9v3M744.5 1725.9v3M862.4 175.9v3M862.4 330.9v3M862.4 485.9v3M862.4 640.9v3M862.4 795.9v3M862.4 950.9v3M862.4 1105.9v3M862.4 1260.9v3M862.4 1415.9v3M862.4 1570.9v3M862.4 1725.9v3M980.4 175.9v3M980.4 330.9v3M980.4 485.9v3M980.4 640.9v3M980.4 795.9v3M980.4 950.9v3M980.4 1105.9v3M980.4 1260.9v3M980.4 1415.9v3M980.4 1570.9v3M980.4 1725.9v3M1096.9 177.4h3M1098.4 175.9v3M1096.9 208.4h3M1096.9 239.4h3M1096.9 270.4h3M1096.9 301.4h3M1096.9 332.4h3M1098.4 330.9v3M1096.9 363.4h3M1096.9 394.4h3M1096.9 425.4h3M1096.9 456.4h3M1096.9 487.4h3M1098.4 485.9v3M1096.9 518.4h3M1096.9 549.4h3M1096.9 580.4h3M1096.9 611.4h3M1096.9 642.4h3M1098.4 640.9v3M1096.9 673.4h3M1096.9 704.4h3M1096.9 735.4h3M1096.9 766.4h3M1096.9 797.4h3M1098.4 795.9v3M1096.9 828.4h3M1096.9 859.4h3M1096.9 890.4h3M1096.9 921.4h3M1096.9 952.4h3M1098.4 950.9v3M1096.9 983.4h3M1096.9 1014.4h3M1096.9 1045.4h3M1096.9 1076.4h3M1096.9 1107.4h3M1098.4 1105.9v3M1096.9 1138.4h3M1096.9 1169.4h3M1096.9 1200.4h3M1096.9 1231.4h3M1096.9 1262.4h3M1098.4 1260.9v3M1096.9 1293.4h3M1096.9 1324.4h3M1096.9 1355.4h3M1096.9 1386.4h3M1096.9 1417.4h3M1098.4 1415.9v3M1096.9 1448.4h3M1096.9 1479.4h3M1096.9 1510.4h3M1096.9 1541.4h3M1096.9 1572.4h3M1098.4 1570.9v3M1096.9 1603.4h3M1096.9 1634.4h3M1096.9 1665.4h3M1096.9 1696.4h3M1096.9 1727.4h3M1098.4 1725.9v3M1216.4 175.9v3M1216.4 330.9v3M1216.4 485.9v3M1216.4 640.9v3M1216.4 795.9v3M1216.4 950.9v3M1216.4 1105.9v3M1216.4 1260.9v3M1216.4 1415.9v3M1216.4 1570.9v3M1216.4 1725.9v3M1334.4 175.9v3M1334.4 330.9v3M1334.4 485.9v3M1334.4 640.9v3M1334.4 795.9v3M1334.4 950.9v3M1334.4 1105.9v3M1334.4 1260.9v3M1334.4 1415.9v3M1334.4 1570.9v3M1334.4 1725.9v3M1452.3 175.9v3M1452.3 330.9v3M1452.3 485.9v3M1452.3 640.9v3M1452.3 795.9v3M1452.3 950.9v3M1452.3 1105.9v3M1452.3 1260.9v3M1452.3 1415.9v3M1452.3 1570.9v3M1452.3 1725.9v3M1570.3 175.9v3M1570.3 330.9v3M1570.3 485.9v3M1570.3 640.9v3M1570.3 795.9v3M1570.3 950.9v3M1570.3 1105.9v3M1570.3 1260.9v3M1570.3 1415.9v3M1570.3 1570.9v3M1570.3 1725.9v3M1686.8 177.4h3M1688.3 175.9v3M1686.8 208.4h3M1686.8 239.4h3M1686.8 270.4h3M1686.8 301.4h3M1686.8 332.4h3M1688.3 330.9v3M1686.8 363.4h3M1686.8 394.4h3M1686.8 425.4h3M1686.8 456.4h3M1686.8 487.4h3M1688.3 485.9v3M1686.8 518.4h3M1686.8 549.4h3M1686.8 580.4h3M1686.8 611.4h3M1686.8 642.4h3M1688.3 640.9v3M1686.8 673.4h3M1686.8 704.4h3M1686.8 735.4h3M1686.8 766.4h3M1686.8 797.4h3M1688.3 795.9v3M1686.8 828.4h3M1686.8 859.4h3M1686.8 890.4h3M1686.8 921.4h3M1686.8 952.4h3M1688.3 950.9v3M1686.8 983.4h3M1686.8 1014.4h3M1686.8 1045.4h3M1686.8 1076.4h3M1686.8 1107.4h3M1688.3 1105.9v3M1686.8 1138.4h3M1686.8 1169.4h3M1686.8 1200.4h3M1686.8 1231.4h3M1686.8 1262.4h3M1688.3 1260.9v3M1686.8 1293.4h3M1686.8 1324.4h3M1686.8 1355.4h3M1686.8 1386.4h3M1686.8 1417.4h3M1688.3 1415.9v3M1686.8 1448.4h3M1686.8 1479.4h3M1686.8 1510.4h3M1686.8 1541.4h3M1686.8 1572.4h3M1688.3 1570.9v3M1686.8 1603.4h3M1686.8 1634.4h3M1686.8 1665.4h3M1686.8 1696.4h3M1686.8 1727.4h3M1688.3 1725.9v3M1806.3 175.9v3M1806.3 330.9v3M1806.3 485.9v3M1806.3 640.9v3M1806.3 795.9v3M1806.3 950.9v3M1806.3 1105.9v3M1806.3 1260.9v3M1806.3 1415.9v3M1806.3 1570.9v3M1806.3 1725.9v3M1924.3 175.9v3M1924.3 330.9v3M1924.3 485.9v3M1924.3 640.9v3M1924.3 795.9v3M1924.3 950.9v3M1924.3 1105.9v3M1924.3 1260.9v3M1924.3 1415.9v3M1924.3 1570.9v3M1924.3 1725.9v3M2042.2 175.9v3M2042.2 330.9v3M2042.2 485.9v3M2042.2 640.9v3M2042.2 795.9v3M2042.2 950.9v3M2042.2 1105.9v3M2042.2 1260.9v3M2042.2 1415.9v3M2042.2 1570.9v3M2042.2 1725.9v3M2160.2 175.9v3M2160.2 330.9v3M2160.2 485.9v3M2160.2 640.9v3M2160.2 795.9v3M2160.2 950.9v3M2160.2 1105.9v3M2160.2 1260.9v3M2160.2 1415.9v3M2160.2 1570.9v3M2160.2 1725.9v3M2276.7 177.4h3M2278.2 175.9v3M2276.7 208.4h3M2276.7 239.4h3M2276.7 270.4h3M2276.7 301.4h3M2276.7 332.4h3M2278.2 330.9v3M2276.7 363.4h3M2276.7 394.4h3M2276.7 425.4h3M2276.7 456.4h3M2276.7 487.4h3M2278.2 485.9v3M2276.7 518.4h3M2276.7 549.4h3M2276.7 580.4h3M2276.7 611.4h3M2276.7 642.4h3M2278.2 640.9v3M2276.7 673.4h3M2276.7 704.4h3M2276.7 735.4h3M2276.7 766.4h3M2276.7 797.4h3M2278.2 795.9v3M2276.7 828.4h3M2276.7 859.4h3M2276.7 890.4h3M2276.7 921.4h3M2276.7 952.4h3M2278.2 950.9v3M2276.7 983.4h3M2276.7 1014.4h3M2276.7 1045.4h3M2276.7 1076.4h3M2276.7 1107.4h3M2278.2 1105.9v3M2276.7 1138.4h3M2276.7 1169.4h3M2276.7 1200.4h3M2276.7 1231.4h3M2276.7 1262.4h3M2278.2 1260.9v3M2276.7 1293.4h3M2276.7 1324.4h3M2276.7 1355.4h3M2276.7 1386.4h3M2276.7 1417.4h3M2278.2 1415.9v3M2276.7 1448.4h3M2276.7 1479.4h3M2276.7 1510.4h3M2276.7 1541.4h3M2276.7 1572.4h3M2278.2 1570.9v3M2276.7 1603.4h3M2276.7 1634.4h3M2276.7 1665.4h3M2276.7 1696.4h3M2276.7 1727.4h3M2278.2 1725.9v3M2396.2 175.9v3M2396.2 330.9v3M2396.2 485.9v3M2396.2 640.9v3M2396.2 795.9v3M2396.2 950.9v3M2396.2 1105.9v3M2396.2 1260.9v3M2396.2 1415.9v3M2396.2 1570.9v3M2396.2 1725.9v3M2514.2 175.9v3M2514.2 330.9v3M2514.2 485.9v3M2514.2 640.9v3M2514.2 795.9v3M2514.2 950.9v3M2514.2 1105.9v3M2514.2 1260.9v3M2514.2 1415.9v3M2514.2 1570.9v3M2514.2 1725.9v3M2632.1 175.9v3M2632.1 330.9v3M2632.1 485.9v3M2632.1 640.9v3M2632.1 795.9v3M2632.1 950.9v3M2632.1 1105.9v3M2632.1 1260.9v3M2632.1 1415.9v3M2632.1 1570.9v3M2632.1 1725.9v3M2750.1 175.9v3M2750.1 330.9v3M2750.1 485.9v3M2750.1 640.9v3M2750.1 795.9v3M2750.1 950.9v3M2750.1 1105.9v3M2750.1 1260.9v3M2750.1 1415.9v3M2750.1 1570.9v3M2750.1 1725.9v3M2866.6 177.4h3M2868.1 175.9v3M2866.6 208.4h3M2866.6 239.4h3M2866.6 270.4h3M2866.6 301.4h3M2866.6 332.4h3M2868.1 330.9v3M2866.6 363.4h3M2866.6 394.4h3M2866.6 425.4h3M2866.6 456.4h3M2866.6 487.4h3M2868.1 485.9v3M2866.6 518.4h3M2866.6 549.4h3M2866.6 580.4h3M2866.6 611.4h3M2866.6 642.4h3M2868.1 640.9v3M2866.6 673.4h3M2866.6 704.4h3M2866.6 735.4h3M2866.6 766.4h3M2866.6 797.4h3M2868.1 795.9v3M2866.6 828.4h3M2866.6 859.4h3M2866.6 890.4h3M2866.6 921.4h3M2866.6 952.4h3M2868.1 950.9v3M2866.6 983.4h3M2866.6 1014.4h3M2866.6 1045.4h3M2866.6 1076.4h3M2866.6 1107.4h3M2868.1 1105.9v3M2866.6 1138.4h3M2866.6 1169.4h3M2866.6 1200.4h3M2866.6 1231.4h3M2866.6 1262.4h3M2868.1 1260.9v3M2866.6 1293.4h3M2866.6 1324.4h3M2866.6 1355.4h3M2866.6 1386.4h3M2866.6 1417.4h3M2868.1 1415.9v3M2866.6 1448.4h3M2866.6 1479.4h3M2866.6 1510.4h3M2866.6 1541.4h3M2866.6 1572.4h3M2868.1 1570.9v3M2866.6 1603.4h3M2866.6 1634.4h3M2866.6 1665.4h3M2866.6 1696.4h3M2866.6 1727.4h3M2868.1 1725.9v3M2986.1 175.9v3M2986.1 330.9v3M2986.1 485.9v3M2986.1 640.9v3M2986.1 795.9v3M2986.1 950.9v3M2986.1 1105.9v3M2986.1 1260.9v3M2986.1 1415.9v3M2986.1 1570.9v3M2986.1 1725.9v3M3104.1 175.9v3M3104.1 330.9v3M3104.1 485.9v3M3104.1 640.9v3M3104.1 795.9v3M3104.1 950.9v3M3104.1 1105.9v3M3104.1 1260.9v3M3104.1 1415.9v3M3104.1 1570.9v3M3104.1 1725.9v3" fill="none" stroke="#1fa08e" stroke-width="1.1"/>
<path d="M508.5 1728.2 V1736 M502.2 1734.6 L508.5 1728.2 L514.7 1734.6" fill="none" stroke="#d4d6c2" stroke-width="1.1"/>
<path d="M1098.4 1728.2 V1736 M1092.1 1734.6 L1098.4 1728.2 L1104.6 1734.6" fill="none" stroke="#d4d6c2" stroke-width="1.1"/>
<path d="M1688.3 1728.2 V1736 M1682.0 1734.6 L1688.3 1728.2 L1694.5 1734.6" fill="none" stroke="#d4d6c2" stroke-width="1.1"/>
<path d="M2278.2 1728.2 V1736 M2271.9 1734.6 L2278.2 1728.2 L2284.4 1734.6" fill="none" stroke="#d4d6c2" stroke-width="1.1"/>
<path d="M2868.1 1728.2 V1736 M2861.8 1734.6 L2868.1 1728.2 L2874.3 1734.6" fill="none" stroke="#d4d6c2" stroke-width="1.1"/>
<text x="472" y="1764.5" fill="#c6cabb" font-size="23.5" text-anchor="start" textLength="72" lengthAdjust="spacingAndGlyphs">-10 ms</text>
<text x="1649.9" y="1764.5" fill="#c6cabb" font-size="23.5" text-anchor="start" textLength="77.2" lengthAdjust="spacingAndGlyphs">+10 ms</text>
<text x="2240" y="1764.5" fill="#c6cabb" font-size="23.5" text-anchor="start" textLength="77.3" lengthAdjust="spacingAndGlyphs">+20 ms</text>
<text x="2829.5" y="1764.5" fill="#c6cabb" font-size="23.5" text-anchor="start" textLength="78" lengthAdjust="spacingAndGlyphs">+30 ms</text>
<text x="1071.5" y="1796.5" fill="#c6cabb" font-size="23.5" text-anchor="start" textLength="50" lengthAdjust="spacingAndGlyphs">0 ms</text>
<polyline points="193.6,927.7 199.5,927.7 205.4,927.7 211.3,927.7 217.2,927.7 223.1,920.7 229.0,920.7 234.9,920.7 240.8,920.7 246.7,920.7 252.6,920.7 258.5,920.7 264.4,920.7 270.3,920.7 276.2,920.7 282.1,920.7 288.0,920.7 293.9,920.7 299.8,920.7 305.7,920.7 311.6,920.7 317.5,920.7 323.4,920.7 329.3,920.7 335.2,920.7 341.1,920.7 347.0,920.7 352.9,920.7 358.8,920.7 364.7,920.7 370.6,920.7 376.5,920.7 382.4,920.7 388.3,920.7 394.2,920.7 400.1,920.7 406.0,927.7 411.9,920.7 417.8,927.7 423.7,927.7 429.6,927.7 435.5,927.7 441.4,927.7 447.3,920.7 453.2,927.7 459.1,927.7 465.0,934.6 470.9,934.6 476.8,934.6 482.7,934.6 488.5,934.6 494.4,934.6 500.3,941.5 506.2,941.5 512.1,941.5 518.0,941.5 523.9,941.5 529.8,941.5 535.7,948.5 541.6,948.5 547.5,948.5 553.4,948.5 559.3,941.5 565.2,955.4 571.1,955.4 577.0,955.4 582.9,955.4 588.8,955.4 594.7,962.3 600.6,969.2 606.5,962.3 612.4,969.2 618.3,962.3 624.2,969.2 630.1,969.2 636.0,969.2 641.9,969.2 647.8,969.2 653.7,976.2 659.6,976.2 665.5,976.2 671.4,976.2 677.3,976.2 683.2,976.2 689.1,983.1 695.0,983.1 700.9,983.1 706.8,983.1 712.7,983.1 718.6,983.1 724.5,990.0 730.4,990.0 736.3,990.0 742.2,990.0 748.1,990.0 754.0,990.0 759.9,990.0 765.8,990.0 771.7,997.0 777.6,997.0 783.5,997.0 789.4,997.0 795.3,997.0 801.2,997.0 807.1,997.0 813.0,997.0 818.9,997.0 824.8,997.0 830.7,997.0 836.6,997.0 842.5,1003.9 848.4,1003.9 854.3,1003.9 860.2,1003.9 866.1,1003.9 872.0,1003.9 877.9,1003.9 883.8,1003.9 889.7,1003.9 895.6,1003.9 901.5,1003.9 907.4,1003.9 913.3,1003.9 919.2,1003.9 925.1,1003.9 931.0,1003.9 936.9,1003.9 942.8,1003.9 948.7,1003.9 954.6,1003.9 960.5,1003.9 966.4,1003.9 972.3,990.0 978.2,997.0 984.1,997.0 990.0,997.0 995.9,997.0 1001.8,997.0 1007.7,997.0 1013.6,997.0 1019.5,997.0 1025.4,997.0 1031.3,997.0 1037.2,990.0 1043.1,990.0 1049.0,990.0 1054.9,990.0 1060.8,990.0 1066.7,990.0 1072.6,990.0 1078.5,983.1 1084.3,983.1 1090.2,983.1 1096.1,983.1 1102.0,983.1 1107.9,983.1 1113.8,976.2 1119.7,976.2 1125.6,976.2 1131.5,976.2 1137.4,976.2 1143.3,983.1 1149.2,969.2 1155.1,969.2 1161.0,969.2 1166.9,969.2 1172.8,969.2 1178.7,962.3 1184.6,962.3 1190.5,962.3 1196.4,962.3 1202.3,962.3 1208.2,955.4 1214.1,955.4 1220.0,955.4 1225.9,955.4 1231.8,955.4 1237.7,955.4 1243.6,948.5 1249.5,948.5 1255.4,948.5 1261.3,948.5 1267.2,948.5 1273.1,941.5 1279.0,941.5 1284.9,941.5 1290.8,941.5 1296.7,941.5 1302.6,941.5 1308.5,934.6 1314.4,934.6 1320.3,934.6 1326.2,934.6 1332.1,934.6 1338.0,934.6 1343.9,934.6 1349.8,927.7 1355.7,927.7 1361.6,927.7 1367.5,927.7 1373.4,927.7 1379.3,927.7 1385.2,927.7 1391.1,927.7 1397.0,927.7 1402.9,927.7 1408.8,920.7 1414.7,920.7 1420.6,920.7 1426.5,920.7 1432.4,927.7 1438.3,920.7 1444.2,920.7 1450.1,920.7 1456.0,920.7 1461.9,920.7 1467.8,920.7 1473.7,920.7 1479.6,920.7 1485.5,920.7 1491.4,920.7 1497.3,920.7 1503.2,920.7 1509.1,920.7 1515.0,920.7 1520.9,920.7 1526.8,920.7 1532.7,920.7 1538.6,920.7 1544.5,920.7 1550.4,920.7 1556.3,920.7 1562.2,920.7 1568.1,920.7 1574.0,920.7 1579.9,920.7 1585.8,920.7 1591.7,920.7 1597.6,927.7 1603.5,927.7 1609.4,927.7 1615.3,927.7 1621.2,927.7 1627.1,927.7 1633.0,927.7 1638.9,927.7 1644.8,934.6 1650.7,934.6 1656.6,934.6 1662.5,934.6 1668.3,941.5 1674.2,934.6 1680.1,934.6 1686.0,941.5 1691.9,941.5 1697.8,941.5 1703.7,941.5 1709.6,941.5 1715.5,955.4 1721.4,948.5 1727.3,948.5 1733.2,948.5 1739.1,948.5 1745.0,955.4 1750.9,955.4 1756.8,955.4 1762.7,955.4 1768.6,955.4 1774.5,955.4 1780.4,962.3 1786.3,962.3 1792.2,962.3 1798.1,962.3 1804.0,962.3 1809.9,969.2 1815.8,969.2 1821.7,969.2 1827.6,969.2 1833.5,969.2 1839.4,983.1 1845.3,976.2 1851.2,976.2 1857.1,976.2 1863.0,976.2 1868.9,983.1 1874.8,983.1 1880.7,983.1 1886.6,983.1 1892.5,983.1 1898.4,983.1 1904.3,983.1 1910.2,990.0 1916.1,990.0 1922.0,990.0 1927.9,990.0 1933.8,990.0 1939.7,990.0 1945.6,990.0 1951.5,990.0 1957.4,997.0 1963.3,997.0 1969.2,997.0 1975.1,997.0 1981.0,997.0 1986.9,997.0 1992.8,997.0 1998.7,997.0 2004.6,997.0 2010.5,997.0 2016.4,997.0 2022.3,1003.9 2028.2,1003.9 2034.1,1003.9 2040.0,997.0 2045.9,1003.9 2051.8,1003.9 2057.7,1003.9 2063.6,1003.9 2069.5,1003.9 2075.4,1003.9 2081.3,1003.9 2087.2,1003.9 2093.1,1003.9 2099.0,1003.9 2104.9,1003.9 2110.8,1003.9 2116.7,1003.9 2122.6,1003.9 2128.5,1003.9 2134.4,1003.9 2140.3,1003.9 2146.2,1003.9 2152.1,997.0 2158.0,997.0 2163.9,997.0 2169.8,997.0 2175.7,997.0 2181.6,997.0 2187.5,997.0 2193.4,997.0 2199.3,997.0 2205.2,997.0 2211.1,997.0 2217.0,990.0 2222.9,990.0 2228.8,990.0 2234.7,983.1 2240.6,990.0 2246.5,990.0 2252.4,990.0 2258.2,983.1 2264.1,983.1 2270.0,983.1 2275.9,983.1 2281.8,983.1 2287.7,983.1 2293.6,976.2 2299.5,976.2 2305.4,976.2 2311.3,976.2 2317.2,976.2 2323.1,976.2 2329.0,969.2 2334.9,969.2 2340.8,969.2 2346.7,969.2 2352.6,976.2 2358.5,962.3 2364.4,962.3 2370.3,962.3 2376.2,962.3 2382.1,962.3 2388.0,962.3 2393.9,955.4 2399.8,955.4 2405.7,955.4 2411.6,955.4 2417.5,955.4 2423.4,948.5 2429.3,948.5 2435.2,948.5 2441.1,948.5 2447.0,948.5 2452.9,948.5 2458.8,941.5 2464.7,941.5 2470.6,941.5 2476.5,941.5 2482.4,941.5 2488.3,941.5 2494.2,934.6 2500.1,934.6 2506.0,934.6 2511.9,934.6 2517.8,934.6 2523.7,934.6 2529.6,934.6 2535.5,927.7 2541.4,927.7 2547.3,927.7 2553.2,927.7 2559.1,927.7 2565.0,927.7 2570.9,927.7 2576.8,927.7 2582.7,927.7 2588.6,920.7 2594.5,920.7 2600.4,920.7 2606.3,920.7 2612.2,920.7 2618.1,920.7 2624.0,920.7 2629.9,920.7 2635.8,920.7 2641.7,920.7 2647.6,920.7 2653.5,920.7 2659.4,920.7 2665.3,920.7 2671.2,920.7 2677.1,920.7 2683.0,920.7 2688.9,920.7 2694.8,920.7 2700.7,920.7 2706.6,920.7 2712.5,920.7 2718.4,920.7 2724.3,920.7 2730.2,920.7 2736.1,920.7 2742.0,920.7 2747.9,920.7 2753.8,920.7 2759.7,920.7 2765.6,920.7 2771.5,920.7 2777.4,920.7 2783.3,927.7 2789.2,927.7 2795.1,927.7 2801.0,927.7 2806.9,927.7 2812.8,927.7 2818.7,927.7 2824.6,934.6 2830.5,934.6 2836.4,934.6 2842.3,934.6 2848.2,934.6 2854.0,934.6 2859.9,934.6 2865.8,941.5 2871.7,941.5 2877.6,941.5 2883.5,948.5 2889.4,941.5 2895.3,941.5 2901.2,948.5 2907.1,948.5 2913.0,948.5 2918.9,948.5 2924.8,948.5 2930.7,955.4 2936.6,955.4 2942.5,955.4 2948.4,955.4 2954.3,955.4 2960.2,962.3 2966.1,962.3 2972.0,962.3 2977.9,962.3 2983.8,962.3 2989.7,969.2 2995.6,969.2 3001.5,969.2 3007.4,969.2 3013.3,969.2 3019.2,976.2 3025.1,976.2 3031.0,976.2 3036.9,976.2 3042.8,976.2 3048.7,976.2 3054.6,983.1 3060.5,983.1 3066.4,990.0 3072.3,983.1 3078.2,983.1 3084.1,983.1 3090.0,990.0 3095.9,990.0 3101.8,990.0 3107.7,990.0 3113.6,990.0 3119.5,983.1 3125.4,990.0 3131.3,990.0" fill="none" stroke="#ffff00" stroke-width="1.3" stroke-linejoin="round" shape-rendering="crispEdges"/>
<polyline points="193.6,652.6 199.5,644.7 205.4,636.8 211.3,636.8 217.2,628.9 223.1,621.0 229.0,613.1 234.9,621.0 240.8,605.2 246.7,597.3 252.6,589.4 258.5,597.3 264.4,589.4 270.3,581.5 276.2,589.4 282.1,581.5 288.0,581.5 293.9,581.5 299.8,581.5 305.7,581.5 311.6,573.6 317.5,573.6 323.4,573.6 329.3,573.6 335.2,589.4 341.1,581.5 347.0,581.5 352.9,581.5 358.8,581.5 364.7,589.4 370.6,589.4 376.5,605.2 382.4,597.3 388.3,597.3 394.2,605.2 400.1,613.1 406.0,613.1 411.9,621.0 417.8,628.9 423.7,636.8 429.6,644.7 435.5,652.6 441.4,644.7 447.3,660.5 453.2,676.3 459.1,684.2 465.0,692.1 470.9,700.0 476.8,707.9 482.7,715.8 488.5,731.6 494.4,739.5 500.3,755.3 506.2,763.2 512.1,779.0 518.0,786.9 523.9,794.8 529.8,810.6 535.7,818.5 541.6,834.3 547.5,850.1 553.4,858.0 559.3,873.8 565.2,889.6 571.1,905.4 577.0,913.3 582.9,929.1 588.8,937.0 594.7,952.8 600.6,968.6 606.5,976.5 612.4,992.3 618.3,1008.1 624.2,1016.0 630.1,1031.8 636.0,1047.6 641.9,1055.5 647.8,1071.3 653.7,1087.1 659.6,1095.0 665.5,1110.8 671.4,1118.7 677.3,1134.5 683.2,1142.4 689.1,1158.2 695.0,1166.1 700.9,1174.0 706.8,1189.8 712.7,1197.7 718.6,1205.6 724.5,1205.6 730.4,1229.3 736.3,1237.2 742.2,1245.1 748.1,1260.9 754.0,1260.9 759.9,1268.8 765.8,1276.7 771.7,1284.6 777.6,1292.5 783.5,1292.5 789.4,1300.4 795.3,1308.3 801.2,1316.2 807.1,1316.2 813.0,1316.2 818.9,1324.1 824.8,1332.0 830.7,1332.0 836.6,1339.9 842.5,1339.9 848.4,1347.8 854.3,1339.9 860.2,1347.8 866.1,1347.8 872.0,1355.7 877.9,1355.7 883.8,1363.6 889.7,1347.8 895.6,1347.8 901.5,1355.7 907.4,1355.7 913.3,1363.6 919.2,1347.8 925.1,1347.8 931.0,1347.8 936.9,1347.8 942.8,1339.9 948.7,1339.9 954.6,1339.9 960.5,1332.0 966.4,1339.9 972.3,1324.1 978.2,1324.1 984.1,1316.2 990.0,1308.3 995.9,1308.3 1001.8,1300.4 1007.7,1292.5 1013.6,1284.6 1019.5,1276.7 1025.4,1268.8 1031.3,1260.9 1037.2,1253.0 1043.1,1237.2 1049.0,1245.1 1054.9,1229.3 1060.8,1221.4 1066.7,1213.5 1072.6,1205.6 1078.5,1189.8 1084.3,1181.9 1090.2,1174.0 1096.1,1158.2 1102.0,1150.3 1107.9,1142.4 1113.8,1126.6 1119.7,1118.7 1125.6,1102.9 1131.5,1095.0 1137.4,1079.2 1143.3,1079.2 1149.2,1055.5 1155.1,1047.6 1161.0,1031.8 1166.9,1016.0 1172.8,1008.1 1178.7,992.3 1184.6,984.4 1190.5,968.6 1196.4,960.7 1202.3,944.9 1208.2,929.1 1214.1,921.2 1220.0,897.5 1225.9,905.4 1231.8,881.7 1237.7,873.8 1243.6,858.0 1249.5,850.1 1255.4,834.3 1261.3,826.4 1267.2,810.6 1273.1,802.7 1279.0,794.8 1284.9,779.0 1290.8,771.1 1296.7,763.2 1302.6,755.3 1308.5,739.5 1314.4,731.6 1320.3,723.7 1326.2,715.8 1332.1,707.9 1338.0,700.0 1343.9,692.1 1349.8,684.2 1355.7,668.4 1361.6,668.4 1367.5,660.5 1373.4,652.6 1379.3,644.7 1385.2,636.8 1391.1,636.8 1397.0,621.0 1402.9,628.9 1408.8,605.2 1414.7,613.1 1420.6,613.1 1426.5,605.2 1432.4,597.3 1438.3,597.3 1444.2,589.4 1450.1,589.4 1456.0,581.5 1461.9,589.4 1467.8,589.4 1473.7,581.5 1479.6,581.5 1485.5,581.5 1491.4,581.5 1497.3,573.6 1503.2,573.6 1509.1,581.5 1515.0,581.5 1520.9,589.4 1526.8,581.5 1532.7,581.5 1538.6,581.5 1544.5,589.4 1550.4,589.4 1556.3,597.3 1562.2,597.3 1568.1,597.3 1574.0,605.2 1579.9,605.2 1585.8,621.0 1591.7,621.0 1597.6,628.9 1603.5,636.8 1609.4,644.7 1615.3,636.8 1621.2,652.6 1627.1,660.5 1633.0,676.3 1638.9,684.2 1644.8,692.1 1650.7,700.0 1656.6,707.9 1662.5,715.8 1668.3,731.6 1674.2,739.5 1680.1,747.4 1686.0,763.2 1691.9,771.1 1697.8,786.9 1703.7,794.8 1709.6,810.6 1715.5,818.5 1721.4,834.3 1727.3,850.1 1733.2,858.0 1739.1,873.8 1745.0,889.6 1750.9,897.5 1756.8,913.3 1762.7,929.1 1768.6,937.0 1774.5,952.8 1780.4,968.6 1786.3,976.5 1792.2,992.3 1798.1,1008.1 1804.0,1016.0 1809.9,1031.8 1815.8,1047.6 1821.7,1055.5 1827.6,1071.3 1833.5,1087.1 1839.4,1095.0 1845.3,1118.7 1851.2,1118.7 1857.1,1134.5 1863.0,1142.4 1868.9,1150.3 1874.8,1166.1 1880.7,1174.0 1886.6,1189.8 1892.5,1197.7 1898.4,1205.6 1904.3,1213.5 1910.2,1229.3 1916.1,1237.2 1922.0,1245.1 1927.9,1253.0 1933.8,1260.9 1939.7,1268.8 1945.6,1284.6 1951.5,1292.5 1957.4,1292.5 1963.3,1300.4 1969.2,1300.4 1975.1,1308.3 1981.0,1316.2 1986.9,1324.1 1992.8,1324.1 1998.7,1324.1 2004.6,1332.0 2010.5,1332.0 2016.4,1339.9 2022.3,1339.9 2028.2,1347.8 2034.1,1347.8 2040.0,1347.8 2045.9,1347.8 2051.8,1355.7 2057.7,1355.7 2063.6,1355.7 2069.5,1363.6 2075.4,1355.7 2081.3,1355.7 2087.2,1355.7 2093.1,1355.7 2099.0,1347.8 2104.9,1339.9 2110.8,1355.7 2116.7,1347.8 2122.6,1339.9 2128.5,1339.9 2134.4,1339.9 2140.3,1332.0 2146.2,1332.0 2152.1,1324.1 2158.0,1324.1 2163.9,1316.2 2169.8,1308.3 2175.7,1308.3 2181.6,1300.4 2187.5,1292.5 2193.4,1284.6 2199.3,1276.7 2205.2,1268.8 2211.1,1260.9 2217.0,1253.0 2222.9,1245.1 2228.8,1237.2 2234.7,1229.3 2240.6,1221.4 2246.5,1213.5 2252.4,1205.6 2258.2,1197.7 2264.1,1174.0 2270.0,1174.0 2275.9,1158.2 2281.8,1150.3 2287.7,1142.4 2293.6,1126.6 2299.5,1118.7 2305.4,1102.9 2311.3,1095.0 2317.2,1079.2 2323.1,1071.3 2329.0,1055.5 2334.9,1047.6 2340.8,1031.8 2346.7,1023.9 2352.6,1008.1 2358.5,992.3 2364.4,984.4 2370.3,968.6 2376.2,960.7 2382.1,944.9 2388.0,929.1 2393.9,921.2 2399.8,905.4 2405.7,897.5 2411.6,881.7 2417.5,873.8 2423.4,858.0 2429.3,850.1 2435.2,834.3 2441.1,826.4 2447.0,818.5 2452.9,794.8 2458.8,794.8 2464.7,779.0 2470.6,771.1 2476.5,763.2 2482.4,755.3 2488.3,739.5 2494.2,731.6 2500.1,723.7 2506.0,715.8 2511.9,707.9 2517.8,700.0 2523.7,700.0 2529.6,684.2 2535.5,676.3 2541.4,668.4 2547.3,660.5 2553.2,660.5 2559.1,644.7 2565.0,636.8 2570.9,628.9 2576.8,628.9 2582.7,621.0 2588.6,613.1 2594.5,613.1 2600.4,597.3 2606.3,605.2 2612.2,589.4 2618.1,597.3 2624.0,589.4 2629.9,597.3 2635.8,589.4 2641.7,581.5 2647.6,581.5 2653.5,581.5 2659.4,581.5 2665.3,581.5 2671.2,581.5 2677.1,573.6 2683.0,573.6 2688.9,589.4 2694.8,589.4 2700.7,581.5 2706.6,573.6 2712.5,581.5 2718.4,581.5 2724.3,589.4 2730.2,581.5 2736.1,589.4 2742.0,605.2 2747.9,605.2 2753.8,605.2 2759.7,613.1 2765.6,613.1 2771.5,621.0 2777.4,628.9 2783.3,636.8 2789.2,644.7 2795.1,644.7 2801.0,652.6 2806.9,660.5 2812.8,668.4 2818.7,684.2 2824.6,692.1 2830.5,700.0 2836.4,707.9 2842.3,715.8 2848.2,731.6 2854.0,739.5 2859.9,747.4 2865.8,771.1 2871.7,771.1 2877.6,786.9 2883.5,794.8 2889.4,810.6 2895.3,818.5 2901.2,834.3 2907.1,850.1 2913.0,858.0 2918.9,873.8 2924.8,889.6 2930.7,897.5 2936.6,913.3 2942.5,929.1 2948.4,937.0 2954.3,944.9 2960.2,968.6 2966.1,976.5 2972.0,992.3 2977.9,1008.1 2983.8,1016.0 2989.7,1031.8 2995.6,1047.6 3001.5,1055.5 3007.4,1071.3 3013.3,1079.2 3019.2,1095.0 3025.1,1110.8 3031.0,1118.7 3036.9,1134.5 3042.8,1142.4 3048.7,1150.3 3054.6,1166.1 3060.5,1174.0 3066.4,1189.8 3072.3,1197.7 3078.2,1205.6 3084.1,1213.5 3090.0,1213.5 3095.9,1237.2 3101.8,1245.1 3107.7,1253.0 3113.6,1260.9 3119.5,1268.8 3125.4,1276.7 3131.3,1284.6" fill="none" stroke="#00f2ff" stroke-width="1.3" stroke-linejoin="round" shape-rendering="crispEdges"/>
<path d="M1085.8 146.7 H1111.3 V170.2 L1098.5 178.6 L1085.8 170.2 Z" fill="#ffff00" stroke="#1c1c30" stroke-width="0.8"/>
<path d="M1091.1 152.5 H1104.9 M1098.3 152.5 V172.7" fill="none" stroke="#22222a" stroke-width="1.1"/>
<rect x="2977" y="1805" width="173" height="44" fill="#656b6b"/>
<rect x="2978.2" y="1806.2" width="170.6" height="41.6" fill="#515757"/>
<rect x="2979.2" y="1807.2" width="168.6" height="39.6" fill="#3a4040"/>
<rect x="2980" y="1808" width="167" height="38" fill="#292e2e"/>
<text x="2983.6" y="1837.4" fill="#ffff00" font-size="23.5" text-anchor="start" textLength="160" lengthAdjust="spacingAndGlyphs">Sample 10 KHz</text>
<rect x="16" y="1850" width="3306" height="67" fill="#656b6b"/>
<rect x="17.2" y="1851.2" width="3303.6" height="64.6" fill="#515757"/>
<rect x="18.2" y="1852.2" width="3301.6" height="62.6" fill="#3a4040"/>
<rect x="19" y="1853" width="3300" height="61" fill="#292e2e"/>
<text x="22.8" y="1880.7" fill="#ffff00" font-size="23.5" text-anchor="start" textLength="212.7" lengthAdjust="spacingAndGlyphs">Vmin= -339.043 mV</text>
<text x="275.1" y="1880.7" fill="#ffff00" font-size="23.5" text-anchor="start" textLength="205.9" lengthAdjust="spacingAndGlyphs">Vmax= 248.783 mV</text>
<text x="526.7" y="1880.7" fill="#ffff00" font-size="23.5" text-anchor="start" textLength="190" lengthAdjust="spacingAndGlyphs">Vpp= 587.826 mV</text>
<text x="779.1" y="1880.7" fill="#ffff00" font-size="23.5" text-anchor="start" textLength="138.6" lengthAdjust="spacingAndGlyphs">F= 49.970 Hz</text>
<text x="22.8" y="1912.4" fill="#00f2ff" font-size="23.5" text-anchor="start" textLength="165.2" lengthAdjust="spacingAndGlyphs">Vmin= -2.651 V</text>
<text x="275.1" y="1912.4" fill="#00f2ff" font-size="23.5" text-anchor="start" textLength="158.4" lengthAdjust="spacingAndGlyphs">Vmax= 2.499 V</text>
<text x="526.7" y="1912.4" fill="#00f2ff" font-size="23.5" text-anchor="start" textLength="142.5" lengthAdjust="spacingAndGlyphs">Vpp= 5.149 V</text>
<text x="779.1" y="1912.4" fill="#00f2ff" font-size="23.5" text-anchor="start" textLength="138.6" lengthAdjust="spacingAndGlyphs">F= 49.980 Hz</text>
</svg></body></html>
